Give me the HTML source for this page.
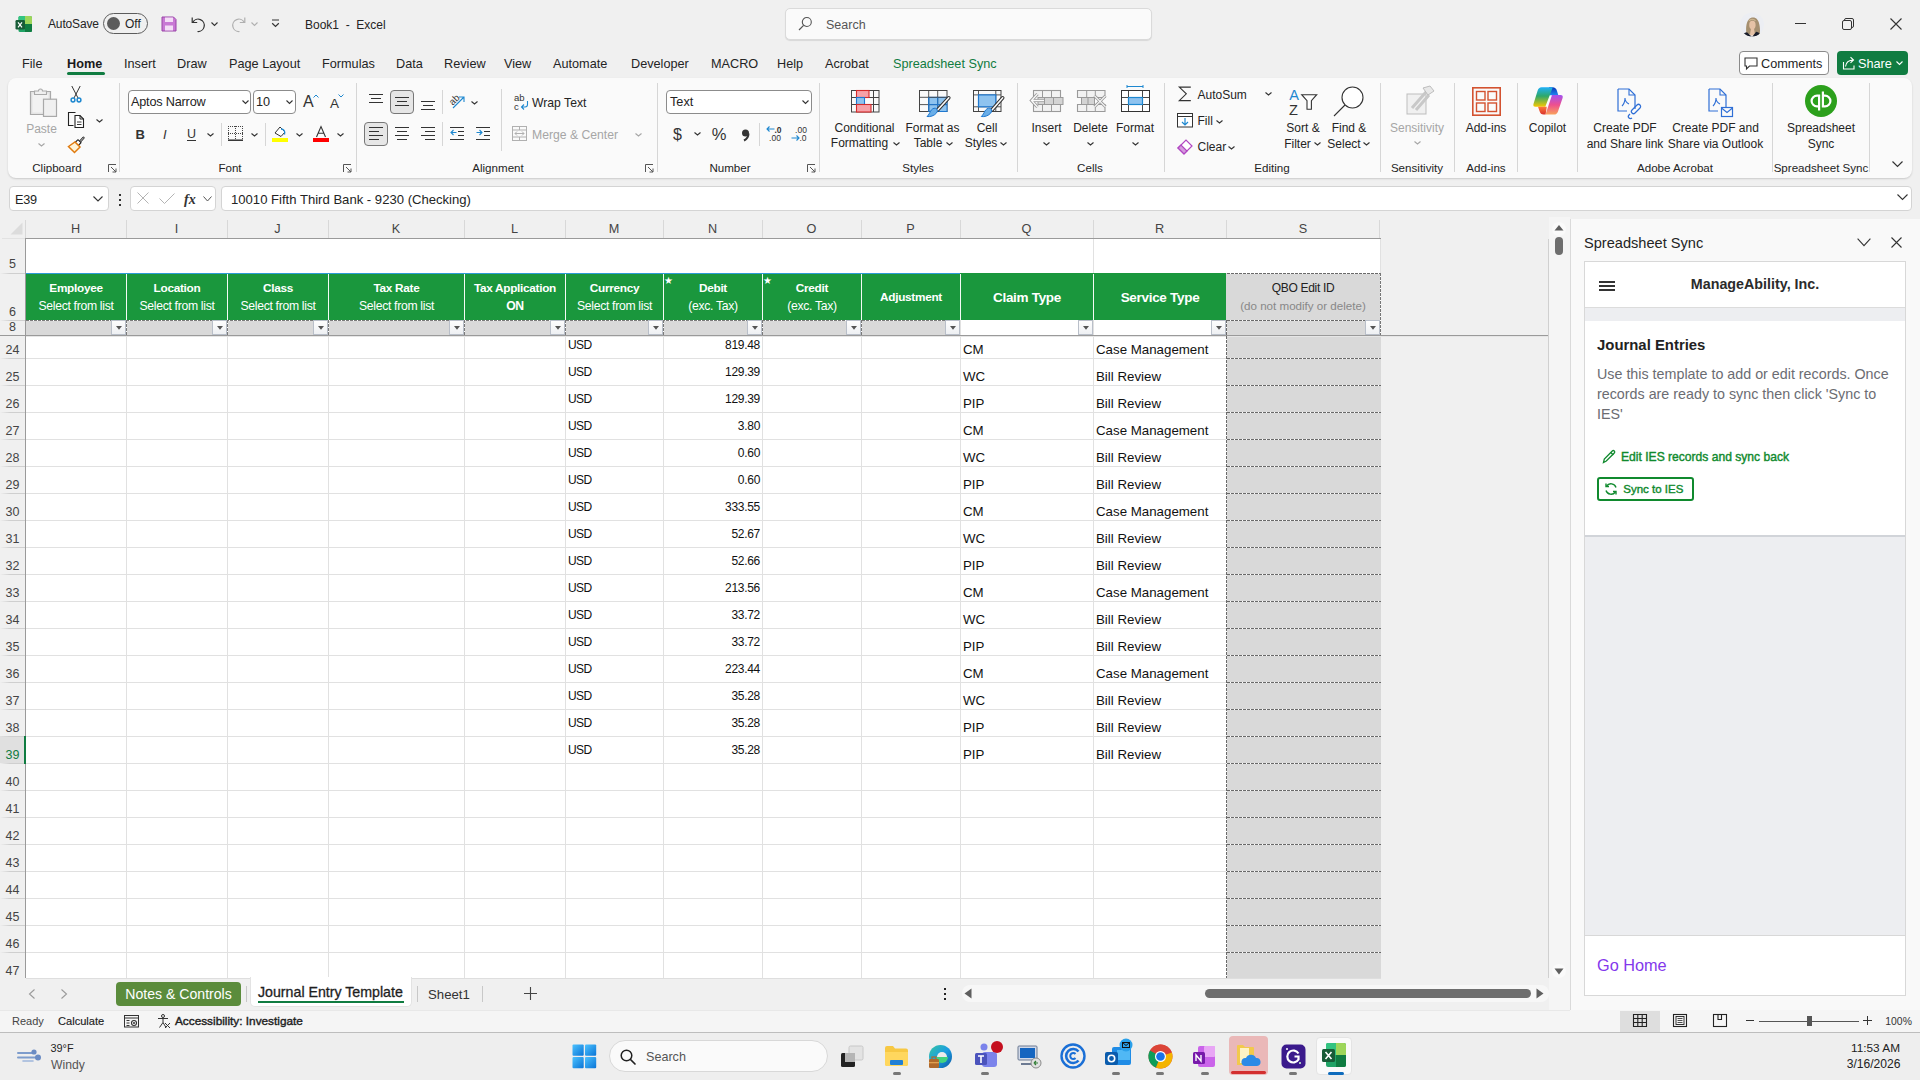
<!DOCTYPE html>
<html><head><meta charset="utf-8">
<style>
*{box-sizing:border-box;margin:0;padding:0}
html,body{width:1920px;height:1080px;overflow:hidden;background:#f0f0f0;font-family:"Liberation Sans",sans-serif;color:#242424;position:relative}
.a{position:absolute}
.t{position:absolute;white-space:nowrap;line-height:1}
svg{position:absolute;overflow:visible}
</style></head><body>
<svg style="left:15px;top:15px;" width="18" height="18" viewBox="0 0 18 18">
 <rect x="3.5" y="1" width="13.5" height="16" rx="1.5" fill="#21a366"/>
 <path d="M10 1h5.5a1.5 1.5 0 0 1 1.5 1.5V9h-7z" fill="#9ed65a"/>
 <path d="M3.5 2.5a1.5 1.5 0 0 1 1.5-1.5h5v8h-6.5z" fill="#33c481"/>
 <path d="M10 9h7v6.5a1.5 1.5 0 0 1-1.5 1.5h-5.5z" fill="#107c41"/>
 <rect x="0.5" y="5" width="9.5" height="9.5" rx="1.2" fill="#185c37"/>
 <path d="M3 7.3l4 5M7 7.3l-4 5" stroke="#fff" stroke-width="1.2"/></svg>
<div class="t" style="top:18.34px;font-size:12px;left:48px;letter-spacing:-0.15px;">AutoSave</div>
<div class="a" style="left:103px;top:13px;width:45px;height:21px;border:1px solid #5c5c5c;border-radius:11px;"></div>
<div class="a" style="left:106.5px;top:17px;width:13px;height:13px;background:#5c5c5c;border-radius:50%;"></div>
<div class="t" style="top:18.34px;font-size:12px;left:125px;">Off</div>
<svg style="left:161px;top:16px;" width="16" height="16" viewBox="0 0 16 16"><path d="M1 1h11.5L15 3.5V15H1z" fill="#c878d4" stroke="#9a45a8" stroke-width="1"/>
 <rect x="4" y="1.5" width="8" height="4.5" fill="#f3ddf6"/><rect x="4" y="9.5" width="8" height="5" fill="#f3ddf6"/></svg>
<svg style="left:190px;top:15px;" width="18" height="18" viewBox="0 0 18 18"><path d="M2.2 2.5v5h5" fill="none" stroke="#333" stroke-width="1.2"/><path d="M2.7 7.2A6.2 6.2 0 1 1 7.5 16.5" fill="none" stroke="#333" stroke-width="1.2"/></svg>
<svg style="left:211px;top:22px;" width="7" height="4.5" viewBox="0 0 7 4.5"><path d="M0.5 0.5L3.5 3.5L6.5 0.5" fill="none" stroke="#333" stroke-width="1.1"/></svg>
<svg style="left:229px;top:15px;" width="18" height="18" viewBox="0 0 18 18"><path d="M15.8 2.5v5h-5" fill="none" stroke="#b0b0b0" stroke-width="1.2"/><path d="M15.3 7.2A6.2 6.2 0 1 0 10.5 16.5" fill="none" stroke="#b0b0b0" stroke-width="1.2"/></svg>
<svg style="left:251px;top:22px;" width="7" height="4.5" viewBox="0 0 7 4.5"><path d="M0.5 0.5L3.5 3.5L6.5 0.5" fill="none" stroke="#b0b0b0" stroke-width="1.1"/></svg>
<svg style="left:271px;top:19px;" width="9" height="9" viewBox="0 0 9 9"><path d="M1 1h7M1.2 4.3l3.3 3.2 3.3-3.2" fill="none" stroke="#333" stroke-width="1.2"/></svg>
<div class="t" style="top:18.84px;font-size:12px;left:305px;">Book1&nbsp; -&nbsp; Excel</div>
<div class="a" style="left:785px;top:8px;width:367px;height:32px;background:#fafafa;border:1px solid #dadada;border-radius:5px;box-shadow:0 1px 1px rgba(0,0,0,.10);"></div>
<svg style="left:797px;top:16px;" width="16" height="16" viewBox="0 0 16 16"><circle cx="9.8" cy="6" r="4.5" fill="none" stroke="#555" stroke-width="1.1"/><path d="M6.6 9.3L2 14" stroke="#555" stroke-width="1.2"/></svg>
<div class="t" style="top:18.92px;font-size:12.5px;left:826px;color:#555;">Search</div>
<svg style="left:1740px;top:12px;" width="24" height="25" viewBox="0 0 24 25"><defs><clipPath id="av"><circle cx="12" cy="12.5" r="12"/></clipPath></defs><g clip-path="url(#av)">
<rect width="24" height="25" fill="#eceef3"/>
<path d="M6.5 22c-.8-5-.5-11.5 2.3-14.5 2.2-2.6 6.3-2.6 8.4 0 2.6 3 3.2 9.5 2.6 15.5z" fill="#a58f70"/>
<path d="M9 9c1-2 5-2.5 6.5 0" fill="none" stroke="#c9b38f" stroke-width="1.2"/>
<ellipse cx="12.4" cy="13" rx="3.2" ry="4.2" fill="#e6c2a6"/>
<path d="M11 16.5h3l1.2 7h-5.4z" fill="#e6c2a6"/>
<path d="M1.5 25c.5-3 2.8-4.5 5.5-4.8l5 4.8 4.2-5.2c2.2.3 4 1.2 4.6 5.2z" fill="#1a1d2a"/></g></svg>
<div class="a" style="left:1795px;top:23px;width:11px;height:1px;background:#333;"></div>
<svg style="left:1842px;top:18px;" width="12" height="12" viewBox="0 0 12 12"><rect x="0.5" y="2.5" width="9" height="9" rx="1.5" fill="none" stroke="#333"/><path d="M2.5 2.3V2a1.5 1.5 0 0 1 1.5-1.5h6A1.5 1.5 0 0 1 11.5 2v6a1.5 1.5 0 0 1-1.5 1.5h-.3" fill="none" stroke="#333"/></svg>
<svg style="left:1890px;top:18px;" width="12" height="12" viewBox="0 0 12 12"><path d="M0.5 0.5l11 11M11.5 0.5l-11 11" stroke="#333" stroke-width="1.1"/></svg>
<div class="t" style="top:57.85px;font-size:12.7px;left:22px;">File</div>
<div class="t" style="top:57.85px;font-size:12.7px;left:124px;">Insert</div>
<div class="t" style="top:57.85px;font-size:12.7px;left:177px;">Draw</div>
<div class="t" style="top:57.85px;font-size:12.7px;left:229px;">Page Layout</div>
<div class="t" style="top:57.85px;font-size:12.7px;left:322px;">Formulas</div>
<div class="t" style="top:57.85px;font-size:12.7px;left:396px;">Data</div>
<div class="t" style="top:57.85px;font-size:12.7px;left:444px;">Review</div>
<div class="t" style="top:57.85px;font-size:12.7px;left:504px;">View</div>
<div class="t" style="top:57.85px;font-size:12.7px;left:553px;">Automate</div>
<div class="t" style="top:57.85px;font-size:12.7px;left:631px;">Developer</div>
<div class="t" style="top:57.85px;font-size:12.7px;left:711px;">MACRO</div>
<div class="t" style="top:57.85px;font-size:12.7px;left:777px;">Help</div>
<div class="t" style="top:57.85px;font-size:12.7px;left:825px;">Acrobat</div>
<div class="t" style="top:57.85px;font-size:12.7px;left:67px;color:#1a1a1a;font-weight:bold;">Home</div>
<div class="a" style="left:67px;top:72px;width:38px;height:3px;background:#107c41;border-radius:2px;"></div>
<div class="t" style="top:57.85px;font-size:12.7px;left:893px;color:#107c41;">Spreadsheet Sync</div>
<div class="a" style="left:1739px;top:51px;width:90px;height:24px;background:#fff;border:1px solid #8a8a8a;border-radius:4px;"></div>
<svg style="left:1744px;top:57px;" width="14" height="13" viewBox="0 0 14 13"><path d="M1 1h12v8H5.5l-3 3V9H1z" fill="none" stroke="#333" stroke-width="1.1"/></svg>
<div class="t" style="top:57.85px;font-size:12.7px;left:1761px;">Comments</div>
<div class="a" style="left:1837px;top:51px;width:71px;height:24px;background:#107c41;border-radius:4px;"></div>
<svg style="left:1842px;top:56px;" width="14" height="14" viewBox="0 0 14 14"><path d="M1.5 6v7h10.5V9.5" fill="none" stroke="#fff" stroke-width="1.1"/><path d="M3.5 10.5c.5-4 3.5-6.5 8-6.5M8.5 1.2l3 2.8-3 2.8" fill="none" stroke="#fff" stroke-width="1.1"/></svg>
<div class="t" style="top:57.85px;font-size:12.7px;left:1858px;color:#fff;">Share</div>
<svg style="left:1896px;top:61px;" width="7" height="4.5" viewBox="0 0 7 4.5"><path d="M0.5 0.5L3.5 3.5L6.5 0.5" fill="none" stroke="#fff" stroke-width="1.1"/></svg>
<div class="a" style="left:8px;top:78px;width:1904px;height:100px;background:#fafafa;border-radius:8px;box-shadow:0 1px 2px rgba(0,0,0,.16);"></div>
<div class="t" style="top:162.08px;font-size:11.6px;left:-43.00px;width:200px;text-align:center;color:#242424;">Clipboard</div>
<div class="t" style="top:162.08px;font-size:11.6px;left:130.00px;width:200px;text-align:center;color:#242424;">Font</div>
<div class="t" style="top:162.08px;font-size:11.6px;left:398.00px;width:200px;text-align:center;color:#242424;">Alignment</div>
<div class="t" style="top:162.08px;font-size:11.6px;left:630.00px;width:200px;text-align:center;color:#242424;">Number</div>
<div class="t" style="top:162.08px;font-size:11.6px;left:818.00px;width:200px;text-align:center;color:#242424;">Styles</div>
<div class="t" style="top:162.08px;font-size:11.6px;left:990.00px;width:200px;text-align:center;color:#242424;">Cells</div>
<div class="t" style="top:162.08px;font-size:11.6px;left:1172.00px;width:200px;text-align:center;color:#242424;">Editing</div>
<div class="t" style="top:162.08px;font-size:11.6px;left:1317.00px;width:200px;text-align:center;color:#242424;">Sensitivity</div>
<div class="t" style="top:162.08px;font-size:11.6px;left:1386.00px;width:200px;text-align:center;color:#242424;">Add-ins</div>
<div class="t" style="top:162.08px;font-size:11.6px;left:1575.00px;width:200px;text-align:center;color:#242424;">Adobe Acrobat</div>
<div class="t" style="top:162.08px;font-size:11.6px;left:1721.00px;width:200px;text-align:center;color:#242424;">Spreadsheet Sync</div>
<div class="a" style="left:119px;top:83px;width:1px;height:89px;background:#d6d6d6;"></div>
<div class="a" style="left:356px;top:83px;width:1px;height:89px;background:#d6d6d6;"></div>
<div class="a" style="left:657px;top:83px;width:1px;height:89px;background:#d6d6d6;"></div>
<div class="a" style="left:819px;top:83px;width:1px;height:89px;background:#d6d6d6;"></div>
<div class="a" style="left:1017px;top:83px;width:1px;height:89px;background:#d6d6d6;"></div>
<div class="a" style="left:1164px;top:83px;width:1px;height:89px;background:#d6d6d6;"></div>
<div class="a" style="left:1380px;top:83px;width:1px;height:89px;background:#d6d6d6;"></div>
<div class="a" style="left:1454px;top:83px;width:1px;height:89px;background:#d6d6d6;"></div>
<div class="a" style="left:1517px;top:83px;width:1px;height:89px;background:#d6d6d6;"></div>
<div class="a" style="left:1577px;top:83px;width:1px;height:89px;background:#d6d6d6;"></div>
<div class="a" style="left:1772px;top:83px;width:1px;height:89px;background:#d6d6d6;"></div>
<div class="a" style="left:1869px;top:83px;width:1px;height:89px;background:#d6d6d6;"></div>
<svg style="left:108px;top:164px;" width="9" height="9" viewBox="0 0 9 9"><path d="M0.5 8V0.5H8" fill="none" stroke="#555" stroke-width="1"/><path d="M3 3l5 5M8 4.5V8H4.5" fill="none" stroke="#555" stroke-width="1"/></svg>
<svg style="left:343px;top:164px;" width="9" height="9" viewBox="0 0 9 9"><path d="M0.5 8V0.5H8" fill="none" stroke="#555" stroke-width="1"/><path d="M3 3l5 5M8 4.5V8H4.5" fill="none" stroke="#555" stroke-width="1"/></svg>
<svg style="left:645px;top:164px;" width="9" height="9" viewBox="0 0 9 9"><path d="M0.5 8V0.5H8" fill="none" stroke="#555" stroke-width="1"/><path d="M3 3l5 5M8 4.5V8H4.5" fill="none" stroke="#555" stroke-width="1"/></svg>
<svg style="left:807px;top:164px;" width="9" height="9" viewBox="0 0 9 9"><path d="M0.5 8V0.5H8" fill="none" stroke="#555" stroke-width="1"/><path d="M3 3l5 5M8 4.5V8H4.5" fill="none" stroke="#555" stroke-width="1"/></svg>
<svg style="left:29px;top:86px;" width="30" height="32" viewBox="0 0 30 32"><path d="M1.5 5.5h20v23h-20z" fill="#e4e4e4" stroke="#a9a9a9" stroke-width="1.2"/><path d="M3.5 7.5h16v19h-16z" fill="#f2f2f2"/>
<path d="M5.5 5h4a2 2 0 0 1 4 0h4v3.5h-12z" fill="#efefef" stroke="#a9a9a9" stroke-width="1.1"/>
<rect x="14.5" y="13.2" width="13" height="17.2" fill="#f0f0f0" stroke="#a9a9a9" stroke-width="1.2"/></svg>
<div class="t" style="top:122.84px;font-size:12px;left:11.50px;width:60px;text-align:center;color:#a6a6a6;">Paste</div>
<svg style="left:37.5px;top:143px;" width="7" height="4" viewBox="0 0 7 4"><path d="M0.5 0.5L3.5 3L6.5 0.5" fill="none" stroke="#a6a6a6" stroke-width="1.1"/></svg>
<svg style="left:70px;top:85px;" width="13" height="18" viewBox="0 0 13 18"><path d="M1.8 1L8 13M10.2 1L4 13" stroke="#333" stroke-width="1"/><circle cx="3" cy="15" r="1.9" fill="none" stroke="#1e88d0" stroke-width="1.5"/><circle cx="9" cy="15" r="1.9" fill="none" stroke="#1e88d0" stroke-width="1.5"/></svg>
<svg style="left:67px;top:111px;" width="18" height="18" viewBox="0 0 18 18"><path d="M8.5 1.5H1.5v13h5" fill="none" stroke="#222" stroke-width="1.1"/><path d="M8 4.5h5l3.5 3.5v8.5H8z" fill="#fff" stroke="#222" stroke-width="1.1"/><path d="M13 4.5V8h3.5" fill="none" stroke="#222"/><path d="M10 11h4.5M10 13.5h4.5" stroke="#222" stroke-width=".9"/></svg>
<svg style="left:96px;top:118.5px;" width="7" height="4" viewBox="0 0 7 4"><path d="M0.5 0.5L3.5 3L6.5 0.5" fill="none" stroke="#333" stroke-width="1.1"/></svg>
<svg style="left:67px;top:136px;" width="18" height="18" viewBox="0 0 18 18"><path d="M16.5 1.8l-5 5.5" stroke="#222" stroke-width="2.4" stroke-linecap="round"/><path d="M16.5 1.8l-5 5.5" stroke="#fff" stroke-width=".8" stroke-linecap="round"/><path d="M8 6.5l3-2.8 3 3-2.8 3z" fill="#fff" stroke="#222" stroke-width="1.1"/><path d="M1.5 10.5L8 6l5 5-5.5 5.5z" fill="#fff3d6" stroke="#e07b10" stroke-width="1.5"/></svg>
<div class="a" style="left:128px;top:90px;width:123px;height:24px;background:#fff;border:1px solid #8c8c8c;border-radius:4px;"></div>
<div class="t" style="top:95.85px;font-size:12.7px;left:131px;color:#242424;letter-spacing:-0.2px;">Aptos Narrow</div>
<svg style="left:241.5px;top:100px;" width="7" height="4.5" viewBox="0 0 7 4.5"><path d="M0.5 0.5L3.5 3.5L6.5 0.5" fill="none" stroke="#333" stroke-width="1.1"/></svg>
<div class="a" style="left:253px;top:90px;width:43px;height:24px;background:#fff;border:1px solid #8c8c8c;border-radius:4px;"></div>
<div class="t" style="top:95.85px;font-size:12.7px;left:256px;color:#242424;">10</div>
<svg style="left:286px;top:100px;" width="7" height="4.5" viewBox="0 0 7 4.5"><path d="M0.5 0.5L3.5 3.5L6.5 0.5" fill="none" stroke="#333" stroke-width="1.1"/></svg>
<div class="t" style="top:93.96px;font-size:16px;left:303px;color:#333;">A</div>
<svg style="left:313px;top:94px;" width="6" height="4" viewBox="0 0 6 4"><path d="M0.5 3.5L3 1l2.5 2.5" fill="none" stroke="#1e88d0" stroke-width="1"/></svg>
<div class="t" style="top:96.52px;font-size:13.5px;left:330px;color:#333;">A</div>
<svg style="left:338px;top:94px;" width="6" height="4" viewBox="0 0 6 4"><path d="M0.5 0.5L3 3l2.5-2.5" fill="none" stroke="#1e88d0" stroke-width="1"/></svg>
<div class="t" style="top:127.50px;font-size:13px;left:135.5px;color:#333;font-weight:bold;">B</div>
<div class="t" style="top:127.50px;font-size:13px;left:163px;color:#333;"><i>I</i></div>
<div class="t" style="top:127.92px;font-size:12.5px;left:187px;color:#333;">U</div>
<div class="a" style="left:187px;top:139.5px;width:9px;height:1px;background:#333;"></div>
<svg style="left:207px;top:133px;" width="7" height="4" viewBox="0 0 7 4"><path d="M0.5 0.5L3.5 3L6.5 0.5" fill="none" stroke="#333" stroke-width="1.1"/></svg>
<div class="a" style="left:221px;top:123px;width:1px;height:23px;background:#d6d6d6;"></div>
<svg style="left:228px;top:126px;" width="16" height="16" viewBox="0 0 16 16"><path d="M0 0.5h15M0 7.5h15M0.5 0v14M14.5 0v14M7.5 0v14" fill="none" stroke="#444" stroke-width="1" stroke-dasharray="1 1"/><path d="M0 14.2h15" stroke="#222" stroke-width="1.4"/></svg>
<svg style="left:251px;top:133px;" width="7" height="4" viewBox="0 0 7 4"><path d="M0.5 0.5L3.5 3L6.5 0.5" fill="none" stroke="#333" stroke-width="1.1"/></svg>
<div class="a" style="left:265px;top:123px;width:1px;height:23px;background:#d6d6d6;"></div>
<svg style="left:272px;top:125px;" width="17" height="17" viewBox="0 0 17 17"><path d="M3 8l5-6 5 5-4 4.5z" fill="#fff" stroke="#333" stroke-width="1"/><path d="M9 4c2.5 0 4.5 2 3.5 5.5" fill="none" stroke="#1e88d0" stroke-width="1.3"/><rect x="0" y="13" width="16" height="4" fill="#ffff00"/></svg>
<svg style="left:296px;top:133px;" width="7" height="4" viewBox="0 0 7 4"><path d="M0.5 0.5L3.5 3L6.5 0.5" fill="none" stroke="#333" stroke-width="1.1"/></svg>
<svg style="left:316px;top:126px;" width="10" height="12" viewBox="0 0 10 12"><path d="M0.5 11L5 0.6 9.5 11M2.2 7.3h5.6" fill="none" stroke="#333" stroke-width="1.1"/></svg>
<div class="a" style="left:313px;top:138px;width:16px;height:4px;background:#ff0000;"></div>
<svg style="left:336.5px;top:133px;" width="7" height="4" viewBox="0 0 7 4"><path d="M0.5 0.5L3.5 3L6.5 0.5" fill="none" stroke="#333" stroke-width="1.1"/></svg>
<div class="a" style="left:369px;top:94px;width:14px;height:1px;background:#333;"></div>
<div class="a" style="left:371px;top:98px;width:10px;height:1px;background:#333;"></div>
<div class="a" style="left:369px;top:102px;width:14px;height:1px;background:#333;"></div>
<div class="a" style="left:390px;top:90px;width:24px;height:24px;background:#e6e6e6;border:1px solid #777;border-radius:4px;"></div>
<div class="a" style="left:395px;top:97px;width:14px;height:1px;background:#333;"></div>
<div class="a" style="left:397px;top:101px;width:10px;height:1px;background:#333;"></div>
<div class="a" style="left:395px;top:105px;width:14px;height:1px;background:#333;"></div>
<div class="a" style="left:421px;top:101px;width:14px;height:1px;background:#333;"></div>
<div class="a" style="left:423px;top:105px;width:10px;height:1px;background:#333;"></div>
<div class="a" style="left:421px;top:109px;width:14px;height:1px;background:#333;"></div>
<div class="a" style="left:442px;top:90px;width:1px;height:24px;background:#d6d6d6;"></div>
<div class="t" style="top:95.01px;font-size:9.5px;left:449px;color:#333;"><span style="display:inline-block;transform:rotate(-45deg)">ab</span></div>
<svg style="left:452px;top:95px;" width="14" height="14" viewBox="0 0 14 14"><path d="M1 13L12 2M7 2h5v5" fill="none" stroke="#1e88d0" stroke-width="1.1"/></svg>
<svg style="left:471px;top:101px;" width="7" height="4" viewBox="0 0 7 4"><path d="M0.5 0.5L3.5 3L6.5 0.5" fill="none" stroke="#333" stroke-width="1.1"/></svg>
<div class="a" style="left:501px;top:89px;width:1px;height:62px;background:#d6d6d6;"></div>
<div class="t" style="top:93.01px;font-size:9.5px;left:514px;color:#333;">ab</div>
<div class="t" style="top:101.51px;font-size:9.5px;left:514px;color:#333;">c</div>
<svg style="left:520px;top:100px;" width="9" height="10" viewBox="0 0 9 10"><path d="M7.5 1v3.5a2.5 2.5 0 0 1-2.5 2.5H1.5M4 4.5L1.5 7 4 9.5" fill="none" stroke="#1e88d0" stroke-width="1.1"/></svg>
<div class="t" style="top:97.02px;font-size:12.2px;left:532px;color:#242424;">Wrap Text</div>
<div class="a" style="left:364px;top:122px;width:24px;height:24px;background:#e6e6e6;border:1px solid #777;border-radius:4px;"></div>
<div class="a" style="left:369px;top:127px;width:14px;height:1px;background:#333;"></div>
<div class="a" style="left:369px;top:131px;width:10px;height:1px;background:#333;"></div>
<div class="a" style="left:369px;top:135px;width:14px;height:1px;background:#333;"></div>
<div class="a" style="left:369px;top:139px;width:10px;height:1px;background:#333;"></div>
<div class="a" style="left:395px;top:127px;width:14px;height:1px;background:#333;"></div>
<div class="a" style="left:397px;top:131px;width:10px;height:1px;background:#333;"></div>
<div class="a" style="left:395px;top:135px;width:14px;height:1px;background:#333;"></div>
<div class="a" style="left:397px;top:139px;width:10px;height:1px;background:#333;"></div>
<div class="a" style="left:421px;top:127px;width:14px;height:1px;background:#333;"></div>
<div class="a" style="left:425px;top:131px;width:10px;height:1px;background:#333;"></div>
<div class="a" style="left:421px;top:135px;width:14px;height:1px;background:#333;"></div>
<div class="a" style="left:425px;top:139px;width:10px;height:1px;background:#333;"></div>
<div class="a" style="left:442px;top:122px;width:1px;height:24px;background:#d6d6d6;"></div>
<div class="a" style="left:450px;top:127px;width:14px;height:1px;background:#333;"></div>
<div class="a" style="left:458px;top:131px;width:6px;height:1px;background:#333;"></div>
<div class="a" style="left:458px;top:135px;width:6px;height:1px;background:#333;"></div>
<div class="a" style="left:450px;top:139px;width:14px;height:1px;background:#333;"></div>
<svg style="left:450px;top:129px;" width="7" height="7" viewBox="0 0 7 7"><path d="M6.5 3.5H1M3.5 1L1 3.5 3.5 6" fill="none" stroke="#1e88d0" stroke-width="1.1"/></svg>
<div class="a" style="left:476px;top:127px;width:14px;height:1px;background:#333;"></div>
<div class="a" style="left:484px;top:131px;width:6px;height:1px;background:#333;"></div>
<div class="a" style="left:484px;top:135px;width:6px;height:1px;background:#333;"></div>
<div class="a" style="left:476px;top:139px;width:14px;height:1px;background:#333;"></div>
<svg style="left:476px;top:129px;" width="7" height="7" viewBox="0 0 7 7"><path d="M0.5 3.5H6M3.5 1L6 3.5 3.5 6" fill="none" stroke="#1e88d0" stroke-width="1.1"/></svg>
<svg style="left:512px;top:126px;" width="16" height="16" viewBox="0 0 16 16"><rect x="0.5" y="0.5" width="14" height="14" fill="none" stroke="#b0b0b0"/><path d="M0.5 4h14M0.5 11h14M7.5 0.5v3.5M7.5 11v3.5M3 7.5h9M5 5.5l-2 2 2 2M10 5.5l2 2-2 2" fill="none" stroke="#b0b0b0"/></svg>
<div class="t" style="top:129.02px;font-size:12.2px;left:532px;color:#a6a6a6;">Merge &amp; Center</div>
<svg style="left:634.5px;top:133px;" width="7" height="4" viewBox="0 0 7 4"><path d="M0.5 0.5L3.5 3L6.5 0.5" fill="none" stroke="#a6a6a6" stroke-width="1.1"/></svg>
<div class="a" style="left:666px;top:90px;width:146px;height:24px;background:#fff;border:1px solid #8c8c8c;border-radius:4px;"></div>
<div class="t" style="top:95.85px;font-size:12.7px;left:670px;color:#242424;">Text</div>
<svg style="left:802px;top:100px;" width="7" height="4.5" viewBox="0 0 7 4.5"><path d="M0.5 0.5L3.5 3.5L6.5 0.5" fill="none" stroke="#333" stroke-width="1.1"/></svg>
<div class="t" style="top:126.96px;font-size:16px;left:667.50px;width:20px;text-align:center;color:#333;font-weight:300;">$</div>
<svg style="left:693.5px;top:132px;" width="7" height="4" viewBox="0 0 7 4"><path d="M0.5 0.5L3.5 3L6.5 0.5" fill="none" stroke="#333" stroke-width="1.1"/></svg>
<div class="t" style="top:126.48px;font-size:16.5px;left:707.00px;width:24px;text-align:center;color:#333;">%</div>
<svg style="left:741px;top:129px;" width="9" height="12" viewBox="0 0 9 12"><circle cx="4.5" cy="4" r="3.5" fill="#333"/><path d="M7.5 4.5c0 3-1.5 5.5-4.5 7" fill="none" stroke="#333" stroke-width="2"/></svg>
<div class="a" style="left:759px;top:123px;width:1px;height:23px;background:#d6d6d6;"></div>
<div class="t" style="top:126.45px;font-size:8.5px;left:768.00px;width:20px;text-align:center;color:#333;font-weight:bold;">.0</div>
<div class="t" style="top:134.45px;font-size:8.5px;left:765.00px;width:20px;text-align:center;color:#333;">.00</div>
<svg style="left:766px;top:126px;" width="9" height="6" viewBox="0 0 9 6"><path d="M8.5 3H1M3.5 0.5L1 3l2.5 2.5" fill="none" stroke="#1e88d0" stroke-width="1.1"/></svg>
<div class="t" style="top:126.45px;font-size:8.5px;left:791.00px;width:20px;text-align:center;color:#333;">.00</div>
<div class="t" style="top:134.45px;font-size:8.5px;left:793.00px;width:20px;text-align:center;color:#333;">.0</div>
<svg style="left:791px;top:135px;" width="9" height="6" viewBox="0 0 9 6"><path d="M0.5 3H8M5.5 0.5L8 3 5.5 5.5" fill="none" stroke="#1e88d0" stroke-width="1.1"/></svg>
<svg style="left:851px;top:90px;" width="29" height="23" viewBox="0 0 29 23"><rect x="0.5" y="0.5" width="27.5" height="21.5" fill="#fafafa" stroke="#444" stroke-width="1"/>
<path d="M5.5 0.5v21.5M22.5 0.5v21.5M0.5 7.5h27.5M0.5 14.5h27.5" stroke="#444" fill="none" stroke-width="1"/>
<rect x="5.5" y="0.5" width="12.5" height="7" fill="#f7a1a8" stroke="#d52b2b" stroke-width="1.1"/>
<rect x="5.5" y="7.5" width="8" height="7" fill="#8ec3ef" stroke="#1e78d0" stroke-width="1.1"/>
<rect x="5.5" y="14.5" width="14.5" height="7.5" fill="#f7a1a8" stroke="#d52b2b" stroke-width="1.1"/></svg>
<div class="t" style="top:121.84px;font-size:12px;left:814.50px;width:100px;text-align:center;color:#242424;">Conditional</div>
<div class="t" style="top:136.84px;font-size:12px;left:809.50px;width:100px;text-align:center;color:#242424;">Formatting</div>
<svg style="left:892.5px;top:141.5px;" width="7" height="4" viewBox="0 0 7 4"><path d="M0.5 0.5L3.5 3L6.5 0.5" fill="none" stroke="#333" stroke-width="1.1"/></svg>
<svg style="left:919px;top:90px;" width="33" height="28" viewBox="0 0 33 28"><rect x="0.5" y="0.5" width="27.5" height="21" fill="#fafafa" stroke="#444"/>
<rect x="9.7" y="7.3" width="18.3" height="14.2" fill="#8ec3ef" stroke="#1e78d0"/>
<path d="M9.7 0.5v21M18.7 0.5v21M0.5 7.3h27.5M0.5 14.6h27.5" stroke="#444" fill="none" stroke-width=".9"/>
<path d="M9.7 7.3v14.2M18.7 7.3v14.2M9.7 14.6h18.3" stroke="#1e78d0" stroke-width="1"/>
<path d="M29.8 7.8L18.6 20" stroke="#333" stroke-width="3.6" stroke-linecap="round"/><path d="M29.8 7.8L18.6 20" stroke="#fafafa" stroke-width="1.6" stroke-linecap="round"/>
<path d="M8 26.5c3 .5 7-.5 9.5-3.5 1.5-2 1-4.2-1-4.7-2-.5-4 1-5 3-.8 1.6-1.8 3.7-3.5 5.2z" fill="#6aaee8" stroke="#1e78d0" stroke-width="1"/></svg>
<div class="t" style="top:121.84px;font-size:12px;left:882.50px;width:100px;text-align:center;color:#242424;">Format as</div>
<div class="t" style="top:136.84px;font-size:12px;left:878.00px;width:100px;text-align:center;color:#242424;">Table</div>
<svg style="left:946px;top:141.5px;" width="7" height="4" viewBox="0 0 7 4"><path d="M0.5 0.5L3.5 3L6.5 0.5" fill="none" stroke="#333" stroke-width="1.1"/></svg>
<svg style="left:973px;top:90px;" width="33" height="28" viewBox="0 0 33 28"><rect x="0.5" y="0.5" width="27.5" height="21" fill="#fafafa" stroke="#444"/>
<path d="M5.5 0.5v21M22.8 0.5v21M0.5 4.9h27.5M0.5 16.8h27.5" stroke="#444" fill="none" stroke-width=".9"/>
<rect x="5.5" y="4.9" width="17.3" height="11.9" fill="#8ec3ef" stroke="#1e78d0" stroke-width="1.2"/>
<path d="M29.7 7.8L19 20" stroke="#333" stroke-width="3.6" stroke-linecap="round"/><path d="M29.7 7.8L19 20" stroke="#fafafa" stroke-width="1.6" stroke-linecap="round"/>
<path d="M8.3 26.5c3 .5 7-.5 9.5-3.5 1.5-2 1-4.2-1-4.7-2-.5-4 1-5 3-.8 1.6-1.8 3.7-3.5 5.2z" fill="#6aaee8" stroke="#1e78d0" stroke-width="1"/></svg>
<div class="t" style="top:121.84px;font-size:12px;left:957.00px;width:60px;text-align:center;color:#242424;">Cell</div>
<div class="t" style="top:136.84px;font-size:12px;left:951.00px;width:60px;text-align:center;color:#242424;">Styles</div>
<svg style="left:999.5px;top:141.5px;" width="7" height="4" viewBox="0 0 7 4"><path d="M0.5 0.5L3.5 3L6.5 0.5" fill="none" stroke="#333" stroke-width="1.1"/></svg>
<svg style="left:1030px;top:89px;" width="35" height="25" viewBox="0 0 35 25"><rect x="3.5" y="1.5" width="27" height="21" fill="#f2f2f2" stroke="#9a9a9a" stroke-width="1.1"/>
<path d="M12.5 1.5v21M21.5 1.5v21" stroke="#9a9a9a" stroke-width="1"/>
<rect x="8" y="8.5" width="25" height="7" fill="#d4d4d4" stroke="#9a9a9a"/><path d="M14.5 8.5v7M23.5 8.5v7" stroke="#9a9a9a"/>
<path d="M7.5 5L1.5 11.5 7.5 18M2 11.5h12" fill="none" stroke="#9a9a9a" stroke-width="3.2" stroke-linejoin="miter"/>
<path d="M7.5 5L1.5 11.5 7.5 18M2 11.5h12" fill="none" stroke="#fafafa" stroke-width="1.3"/></svg>
<div class="t" style="top:121.84px;font-size:12px;left:1016.50px;width:60px;text-align:center;color:#242424;">Insert</div>
<svg style="left:1043px;top:142px;" width="7" height="4" viewBox="0 0 7 4"><path d="M0.5 0.5L3.5 3L6.5 0.5" fill="none" stroke="#333" stroke-width="1.1"/></svg>
<svg style="left:1075px;top:89px;" width="34" height="25" viewBox="0 0 34 25"><path d="M2.5 8.5v-7h27.5v7zM2.5 15.5v7h27.5v-7z" fill="#f2f2f2" stroke="#9a9a9a" stroke-width="1.1"/>
<path d="M11.7 1.5v7M20.3 1.5v7M11.7 15.5v7M20.3 15.5v7" stroke="#9a9a9a"/>
<path d="M2.5 8.5h20l3 3.5-3 3.5h-20" fill="none" stroke="#9a9a9a"/>
<rect x="6.5" y="8.5" width="13" height="7" fill="#d4d4d4" stroke="#9a9a9a"/><path d="M13 8.5v7" stroke="#9a9a9a"/>
<path d="M19.5 6.8l11 11M30.5 6.8l-11 11" stroke="#9a9a9a" stroke-width="3"/>
<path d="M19.5 6.8l11 11M30.5 6.8l-11 11" stroke="#fafafa" stroke-width="1.2"/></svg>
<div class="t" style="top:121.84px;font-size:12px;left:1060.50px;width:60px;text-align:center;color:#242424;">Delete</div>
<svg style="left:1087px;top:142px;" width="7" height="4" viewBox="0 0 7 4"><path d="M0.5 0.5L3.5 3L6.5 0.5" fill="none" stroke="#333" stroke-width="1.1"/></svg>
<svg style="left:1121px;top:85px;" width="29" height="28" viewBox="0 0 29 28"><path d="M6 1.5h16M6 0v3M22 0v3" stroke="#1e88d0" stroke-width="1"/>
<rect x="0.5" y="5.5" width="28" height="21" fill="#fff" stroke="#333"/>
<path d="M0.5 12.5h28M0.5 19.5h28M7.5 5.5v21M21.5 5.5v21" stroke="#333" stroke-width=".9"/>
<rect x="7.5" y="12.5" width="14" height="7" fill="#8ec3ef" stroke="#1e88d0" stroke-width="1.2"/></svg>
<div class="t" style="top:121.84px;font-size:12px;left:1105.00px;width:60px;text-align:center;color:#242424;">Format</div>
<svg style="left:1131.5px;top:141.5px;" width="7" height="4" viewBox="0 0 7 4"><path d="M0.5 0.5L3.5 3L6.5 0.5" fill="none" stroke="#333" stroke-width="1.1"/></svg>
<svg style="left:1178px;top:86px;" width="14" height="16" viewBox="0 0 14 16"><path d="M12.8 1.1H1.3L8.3 7.8 1.3 14.6h11.5" fill="none" stroke="#333" stroke-width="1.1"/></svg>
<div class="t" style="top:88.84px;font-size:12px;left:1197.5px;color:#242424;">AutoSum</div>
<svg style="left:1264.5px;top:92px;" width="7" height="4" viewBox="0 0 7 4"><path d="M0.5 0.5L3.5 3L6.5 0.5" fill="none" stroke="#333" stroke-width="1.1"/></svg>
<svg style="left:1177px;top:113px;" width="16" height="15" viewBox="0 0 16 15"><rect x="0.5" y="0.5" width="15" height="13.5" fill="#fff" stroke="#333"/><path d="M0.5 3.5h15" stroke="#333"/><path d="M8 5v7M5 9l3 3 3-3" fill="none" stroke="#1e88d0" stroke-width="1.2"/></svg>
<div class="t" style="top:114.84px;font-size:12px;left:1197.5px;color:#242424;">Fill</div>
<svg style="left:1216px;top:119.5px;" width="7" height="4" viewBox="0 0 7 4"><path d="M0.5 0.5L3.5 3L6.5 0.5" fill="none" stroke="#333" stroke-width="1.1"/></svg>
<svg style="left:1177px;top:138px;" width="16" height="16" viewBox="0 0 16 16"><path d="M1 10l8-8 6 6-8 8z" fill="#fff" stroke="#b146c2" stroke-width="1.2"/><path d="M1 10l3-3 6 6-3 3z" fill="#d59ade" stroke="#b146c2" stroke-width="1.2"/></svg>
<div class="t" style="top:140.84px;font-size:12px;left:1197.5px;color:#242424;">Clear</div>
<svg style="left:1227.5px;top:145.5px;" width="7" height="4" viewBox="0 0 7 4"><path d="M0.5 0.5L3.5 3L6.5 0.5" fill="none" stroke="#333" stroke-width="1.1"/></svg>
<div class="t" style="top:87.99px;font-size:14.6px;left:1284.00px;width:20px;text-align:center;color:#1e88d0;">A</div>
<div class="t" style="top:102.59px;font-size:14.6px;left:1283.50px;width:20px;text-align:center;color:#333;">Z</div>
<svg style="left:1301px;top:94px;" width="17" height="16" viewBox="0 0 17 16"><path d="M0.7 0.7h15l-5.3 6v8.5H6v-8.5z" fill="#fff" stroke="#333" stroke-width="1.1"/></svg>
<div class="t" style="top:121.84px;font-size:12px;left:1273.00px;width:60px;text-align:center;color:#242424;">Sort &amp;</div>
<div class="t" style="top:137.84px;font-size:12px;left:1267.50px;width:60px;text-align:center;color:#242424;">Filter</div>
<svg style="left:1314px;top:141.5px;" width="7" height="4" viewBox="0 0 7 4"><path d="M0.5 0.5L3.5 3L6.5 0.5" fill="none" stroke="#333" stroke-width="1.1"/></svg>
<svg style="left:1333px;top:86px;" width="32" height="31" viewBox="0 0 32 31"><circle cx="19.5" cy="11.5" r="10.5" fill="#fff" stroke="#333" stroke-width="1.1"/><path d="M12 19L1 30" stroke="#333" stroke-width="1.1"/></svg>
<div class="t" style="top:121.84px;font-size:12px;left:1319.00px;width:60px;text-align:center;color:#242424;">Find &amp;</div>
<div class="t" style="top:137.84px;font-size:12px;left:1314.00px;width:60px;text-align:center;color:#242424;">Select</div>
<svg style="left:1362.5px;top:141.5px;" width="7" height="4" viewBox="0 0 7 4"><path d="M0.5 0.5L3.5 3L6.5 0.5" fill="none" stroke="#333" stroke-width="1.1"/></svg>
<svg style="left:1406px;top:85px;" width="29" height="31" viewBox="0 0 29 31"><rect x="1" y="9" width="19" height="20" fill="#f0f0f0" stroke="#bdbdbd"/>
<path d="M6 23L20 7M10 25L23 10" stroke="#c8c8c8" stroke-width="3"/><path d="M17 3l7-2 4 5-6 4z" fill="#e8e8e8" stroke="#bdbdbd"/></svg>
<div class="t" style="top:121.84px;font-size:12px;left:1377.00px;width:80px;text-align:center;color:#a6a6a6;">Sensitivity</div>
<svg style="left:1414px;top:141px;" width="7" height="4" viewBox="0 0 7 4"><path d="M0.5 0.5L3.5 3L6.5 0.5" fill="none" stroke="#a6a6a6" stroke-width="1.1"/></svg>
<svg style="left:1472px;top:87px;" width="29" height="29" viewBox="0 0 29 29"><rect x="0.8" y="0.8" width="27.4" height="27.4" fill="none" stroke="#d35230" stroke-width="1.6"/><rect x="4.5" y="4.5" width="8.5" height="8.5" fill="none" stroke="#d35230" stroke-width="1.4"/><rect x="16" y="4.5" width="8.5" height="8.5" fill="none" stroke="#d35230" stroke-width="1.4"/><rect x="4.5" y="16" width="8.5" height="8.5" fill="none" stroke="#d35230" stroke-width="1.4"/><rect x="16" y="16" width="8.5" height="8.5" fill="none" stroke="#d35230" stroke-width="1.4"/></svg>
<div class="t" style="top:121.84px;font-size:12px;left:1446.00px;width:80px;text-align:center;color:#242424;">Add-ins</div>
<svg style="left:1533px;top:87px;" width="31" height="28" viewBox="0 0 31 28"><defs><linearGradient id="lgL" x1="0" y1="0" x2="0" y2="1"><stop offset="0" stop-color="#1fb0f8"/><stop offset=".45" stop-color="#2ea86a"/><stop offset="1" stop-color="#f7c800"/></linearGradient>
<linearGradient id="lgR" x1="0" y1="0" x2="0" y2="1"><stop offset="0" stop-color="#a352f0"/><stop offset=".5" stop-color="#ee4f8e"/><stop offset="1" stop-color="#f9a35b"/></linearGradient>
<linearGradient id="lgT" x1="0" y1="0" x2="0" y2="1"><stop offset="0" stop-color="#0a36b8"/><stop offset="1" stop-color="#1e86f0"/></linearGradient>
<linearGradient id="lgB" x1="0" y1="0" x2="0" y2="1"><stop offset="0" stop-color="#ff7a3a"/><stop offset="1" stop-color="#d8302c"/></linearGradient></defs>
<path d="M16 0.3H19.5Q23 0.3 24 4L25.3 8.2H15z" fill="url(#lgT)"/>
<path d="M8.5 0.3H19.8L12.3 19.8H2.3Q0 19.8 0.4 17.3L4.5 4Q5.6 0.3 8.5 0.3z" fill="url(#lgL)"/>
<path d="M5 19.7H13.8L12.6 27.6H10.5Q7.5 27.6 6.5 24z" fill="url(#lgB)"/>
<path d="M19 8.1H27.6Q30.4 8.1 29.6 11L25 24.5Q24 27.6 21 27.6H12.5z" fill="url(#lgR)"/></svg>
<div class="t" style="top:121.84px;font-size:12px;left:1507.50px;width:80px;text-align:center;color:#242424;">Copilot</div>
<svg style="left:1615px;top:88px;" width="27" height="30" viewBox="0 0 27 30"><path d="M3 1h11l6 6v14" fill="none" stroke="#2f6fd6" stroke-width="1.2"/><path d="M3 1v22h9" fill="none" stroke="#2f6fd6" stroke-width="1.2"/><path d="M14 1v6h6" fill="none" stroke="#2f6fd6" stroke-width="1.1"/>
<path d="M7 18c2-2 3-5 3-8 0 3 2 5 4 6" fill="none" stroke="#2f6fd6" stroke-width="1.1"/><path d="M17 22l5-5a2 2 0 0 1 3 3l-5 5a2 2 0 0 1-3-3M15 26l-1 1a2 2 0 0 0 3 3" fill="none" stroke="#2f6fd6" stroke-width="1.2"/></svg>
<div class="t" style="top:121.84px;font-size:12px;left:1575.00px;width:100px;text-align:center;color:#242424;">Create PDF</div>
<div class="t" style="top:137.84px;font-size:12px;left:1575.00px;width:100px;text-align:center;color:#242424;">and Share link</div>
<svg style="left:1706px;top:88px;" width="27" height="30" viewBox="0 0 27 30"><path d="M3 1h11l6 6v14" fill="none" stroke="#2f6fd6" stroke-width="1.2"/><path d="M3 1v22h9" fill="none" stroke="#2f6fd6" stroke-width="1.2"/><path d="M14 1v6h6" fill="none" stroke="#2f6fd6" stroke-width="1.1"/>
<path d="M7 18c2-2 3-5 3-8 0 3 2 5 4 6" fill="none" stroke="#2f6fd6" stroke-width="1.1"/><rect x="15.5" y="19.5" width="11" height="9" fill="#fafafa" stroke="#2f6fd6" stroke-width="1.2"/><path d="M15.5 20l5.5 4.5 5.5-4.5" fill="none" stroke="#2f6fd6" stroke-width="1.1"/></svg>
<div class="t" style="top:121.84px;font-size:12px;left:1655.50px;width:120px;text-align:center;color:#242424;">Create PDF and</div>
<div class="t" style="top:137.84px;font-size:12px;left:1655.50px;width:120px;text-align:center;color:#242424;">Share via Outlook</div>
<svg style="left:1805px;top:85px;" width="32" height="32" viewBox="0 0 32 32"><circle cx="16" cy="16" r="16" fill="#2ca01c"/><path d="M12 9.5a6.5 6.5 0 0 0 0 13h1.5v-2.2H12a4.3 4.3 0 0 1 0-8.6h1v13.8h2.2V9.5z" fill="#fff"/><path d="M20 22.5a6.5 6.5 0 0 0 0-13h-1.5v2.2H20a4.3 4.3 0 0 1 0 8.6h-1V6.5h-2.2v16z" fill="#fff"/></svg>
<div class="t" style="top:121.84px;font-size:12px;left:1771.00px;width:100px;text-align:center;color:#242424;">Spreadsheet</div>
<div class="t" style="top:137.84px;font-size:12px;left:1771.00px;width:100px;text-align:center;color:#242424;">Sync</div>
<svg style="left:1892px;top:161px;" width="11" height="7" viewBox="0 0 11 7"><path d="M0.5 0.5l5 5 5-5" fill="none" stroke="#333" stroke-width="1.2"/></svg>
<div class="a" style="left:9px;top:186px;width:100px;height:25px;background:#fff;border:1px solid #d4d4d4;border-radius:4px;"></div>
<div class="t" style="top:193.85px;font-size:12.7px;left:15px;color:#242424;letter-spacing:-0.3px;">E39</div>
<svg style="left:93px;top:196px;" width="10" height="6" viewBox="0 0 10 6"><path d="M0.5 0.5l4.5 4.5 4.5-4.5" fill="none" stroke="#333" stroke-width="1.1"/></svg>
<div class="a" style="left:119px;top:194px;width:2px;height:2px;background:#333;"></div>
<div class="a" style="left:119px;top:199px;width:2px;height:2px;background:#333;"></div>
<div class="a" style="left:119px;top:204px;width:2px;height:2px;background:#333;"></div>
<div class="a" style="left:130px;top:186px;width:86px;height:25px;background:#fff;border:1px solid #d4d4d4;border-radius:4px;"></div>
<svg style="left:137px;top:192px;" width="12" height="12" viewBox="0 0 12 12"><path d="M0.5 0.5l11 11M11.5 0.5l-11 11" stroke="#b4b4b4" stroke-width="1"/></svg>
<svg style="left:159px;top:193px;" width="16" height="11" viewBox="0 0 16 11"><path d="M0.5 5.5l5 5 10-10" fill="none" stroke="#b4b4b4" stroke-width="1"/></svg>
<div class="t" style="top:193.15px;font-size:14px;left:184px;color:#333;font-family:'Liberation Serif',serif;font-weight:bold;"><i>fx</i></div>
<svg style="left:203px;top:196px;" width="9" height="6" viewBox="0 0 9 6"><path d="M0.5 0.5l4 4.5 4-4.5" fill="none" stroke="#555" stroke-width="1"/></svg>
<div class="a" style="left:221px;top:186px;width:1691px;height:25px;background:#fff;border:1px solid #d4d4d4;border-radius:4px;"></div>
<div class="t" style="top:192.96px;font-size:13.1px;left:231px;color:#242424;">10010 Fifth Third Bank - 9230 (Checking)</div>
<svg style="left:1897px;top:194px;" width="11" height="6" viewBox="0 0 11 6"><path d="M0.5 0.5l5 5 5-5" fill="none" stroke="#333" stroke-width="1.1"/></svg>
<div class="a" style="left:0px;top:217px;width:1549px;height:22px;background:#f0f0f0;"></div>
<svg style="left:10px;top:222px;" width="13" height="13" viewBox="0 0 13 13"><path d="M12.5 0.5v12h-12z" fill="#dcdcdc"/></svg>
<div class="t" style="top:222.85px;font-size:12.7px;left:45.50px;width:60px;text-align:center;color:#444;">H</div>
<div class="a" style="left:126px;top:220px;width:1px;height:18px;background:#d8d8d8;"></div>
<div class="t" style="top:222.85px;font-size:12.7px;left:146.50px;width:60px;text-align:center;color:#444;">I</div>
<div class="a" style="left:227px;top:220px;width:1px;height:18px;background:#d8d8d8;"></div>
<div class="t" style="top:222.85px;font-size:12.7px;left:247.50px;width:60px;text-align:center;color:#444;">J</div>
<div class="a" style="left:328px;top:220px;width:1px;height:18px;background:#d8d8d8;"></div>
<div class="t" style="top:222.85px;font-size:12.7px;left:366.00px;width:60px;text-align:center;color:#444;">K</div>
<div class="a" style="left:464px;top:220px;width:1px;height:18px;background:#d8d8d8;"></div>
<div class="t" style="top:222.85px;font-size:12.7px;left:484.50px;width:60px;text-align:center;color:#444;">L</div>
<div class="a" style="left:565px;top:220px;width:1px;height:18px;background:#d8d8d8;"></div>
<div class="t" style="top:222.85px;font-size:12.7px;left:584.00px;width:60px;text-align:center;color:#444;">M</div>
<div class="a" style="left:663px;top:220px;width:1px;height:18px;background:#d8d8d8;"></div>
<div class="t" style="top:222.85px;font-size:12.7px;left:682.50px;width:60px;text-align:center;color:#444;">N</div>
<div class="a" style="left:762px;top:220px;width:1px;height:18px;background:#d8d8d8;"></div>
<div class="t" style="top:222.85px;font-size:12.7px;left:781.50px;width:60px;text-align:center;color:#444;">O</div>
<div class="a" style="left:861px;top:220px;width:1px;height:18px;background:#d8d8d8;"></div>
<div class="t" style="top:222.85px;font-size:12.7px;left:880.50px;width:60px;text-align:center;color:#444;">P</div>
<div class="a" style="left:960px;top:220px;width:1px;height:18px;background:#d8d8d8;"></div>
<div class="t" style="top:222.85px;font-size:12.7px;left:996.50px;width:60px;text-align:center;color:#444;">Q</div>
<div class="a" style="left:1093px;top:220px;width:1px;height:18px;background:#d8d8d8;"></div>
<div class="t" style="top:222.85px;font-size:12.7px;left:1129.50px;width:60px;text-align:center;color:#444;">R</div>
<div class="a" style="left:1226px;top:220px;width:1px;height:18px;background:#d8d8d8;"></div>
<div class="t" style="top:222.85px;font-size:12.7px;left:1273.00px;width:60px;text-align:center;color:#444;">S</div>
<div class="a" style="left:1379px;top:220px;width:1px;height:18px;background:#d8d8d8;"></div>
<div class="a" style="left:25px;top:220px;width:1px;height:18px;background:#d8d8d8;"></div>
<div class="a" style="left:25px;top:238px;width:1356px;height:1px;background:#9a9a9a;"></div>
<div class="a" style="left:2px;top:238px;width:23px;height:1px;background:#e2e2e2;"></div>
<div class="a" style="left:26px;top:239px;width:1523px;height:739px;background:#f0f0f0;"></div>
<div class="a" style="left:26px;top:239px;width:1355px;height:739px;background:#fff;"></div>
<div class="a" style="left:0px;top:239px;width:25px;height:739px;background:#f0f0f0;"></div>
<div class="a" style="left:25px;top:239px;width:1px;height:739px;background:#9a9a9a;"></div>
<div class="a" style="left:0px;top:736px;width:25px;height:27px;background:#e0e0e0;"></div>
<div class="t" style="top:258.32px;font-size:12.5px;left:-2.50px;width:30px;text-align:center;color:#444;">5</div>
<div class="a" style="left:0px;top:273px;width:25px;height:1px;background:linear-gradient(90deg,rgba(200,200,200,0),#cfcfcf 40%,#cfcfcf);"></div>
<div class="t" style="top:305.72px;font-size:12.5px;left:-2.50px;width:30px;text-align:center;color:#444;">6</div>
<div class="a" style="left:0px;top:320px;width:25px;height:1px;background:linear-gradient(90deg,rgba(200,200,200,0),#cfcfcf 40%,#cfcfcf);"></div>
<div class="t" style="top:320.72px;font-size:12.5px;left:-2.50px;width:30px;text-align:center;color:#444;">8</div>
<div class="a" style="left:0px;top:335px;width:25px;height:1px;background:linear-gradient(90deg,rgba(200,200,200,0),#cfcfcf 40%,#cfcfcf);"></div>
<div class="t" style="top:343.92px;font-size:12.5px;left:-2.50px;width:30px;text-align:center;color:#444;">24</div>
<div class="a" style="left:0px;top:358px;width:25px;height:1px;background:linear-gradient(90deg,rgba(200,200,200,0),#cfcfcf 40%,#cfcfcf);"></div>
<div class="t" style="top:370.92px;font-size:12.5px;left:-2.50px;width:30px;text-align:center;color:#444;">25</div>
<div class="a" style="left:0px;top:385px;width:25px;height:1px;background:linear-gradient(90deg,rgba(200,200,200,0),#cfcfcf 40%,#cfcfcf);"></div>
<div class="t" style="top:397.92px;font-size:12.5px;left:-2.50px;width:30px;text-align:center;color:#444;">26</div>
<div class="a" style="left:0px;top:412px;width:25px;height:1px;background:linear-gradient(90deg,rgba(200,200,200,0),#cfcfcf 40%,#cfcfcf);"></div>
<div class="t" style="top:424.92px;font-size:12.5px;left:-2.50px;width:30px;text-align:center;color:#444;">27</div>
<div class="a" style="left:0px;top:439px;width:25px;height:1px;background:linear-gradient(90deg,rgba(200,200,200,0),#cfcfcf 40%,#cfcfcf);"></div>
<div class="t" style="top:451.92px;font-size:12.5px;left:-2.50px;width:30px;text-align:center;color:#444;">28</div>
<div class="a" style="left:0px;top:466px;width:25px;height:1px;background:linear-gradient(90deg,rgba(200,200,200,0),#cfcfcf 40%,#cfcfcf);"></div>
<div class="t" style="top:478.92px;font-size:12.5px;left:-2.50px;width:30px;text-align:center;color:#444;">29</div>
<div class="a" style="left:0px;top:493px;width:25px;height:1px;background:linear-gradient(90deg,rgba(200,200,200,0),#cfcfcf 40%,#cfcfcf);"></div>
<div class="t" style="top:505.92px;font-size:12.5px;left:-2.50px;width:30px;text-align:center;color:#444;">30</div>
<div class="a" style="left:0px;top:520px;width:25px;height:1px;background:linear-gradient(90deg,rgba(200,200,200,0),#cfcfcf 40%,#cfcfcf);"></div>
<div class="t" style="top:532.92px;font-size:12.5px;left:-2.50px;width:30px;text-align:center;color:#444;">31</div>
<div class="a" style="left:0px;top:547px;width:25px;height:1px;background:linear-gradient(90deg,rgba(200,200,200,0),#cfcfcf 40%,#cfcfcf);"></div>
<div class="t" style="top:559.92px;font-size:12.5px;left:-2.50px;width:30px;text-align:center;color:#444;">32</div>
<div class="a" style="left:0px;top:574px;width:25px;height:1px;background:linear-gradient(90deg,rgba(200,200,200,0),#cfcfcf 40%,#cfcfcf);"></div>
<div class="t" style="top:586.92px;font-size:12.5px;left:-2.50px;width:30px;text-align:center;color:#444;">33</div>
<div class="a" style="left:0px;top:601px;width:25px;height:1px;background:linear-gradient(90deg,rgba(200,200,200,0),#cfcfcf 40%,#cfcfcf);"></div>
<div class="t" style="top:613.92px;font-size:12.5px;left:-2.50px;width:30px;text-align:center;color:#444;">34</div>
<div class="a" style="left:0px;top:628px;width:25px;height:1px;background:linear-gradient(90deg,rgba(200,200,200,0),#cfcfcf 40%,#cfcfcf);"></div>
<div class="t" style="top:640.92px;font-size:12.5px;left:-2.50px;width:30px;text-align:center;color:#444;">35</div>
<div class="a" style="left:0px;top:655px;width:25px;height:1px;background:linear-gradient(90deg,rgba(200,200,200,0),#cfcfcf 40%,#cfcfcf);"></div>
<div class="t" style="top:667.92px;font-size:12.5px;left:-2.50px;width:30px;text-align:center;color:#444;">36</div>
<div class="a" style="left:0px;top:682px;width:25px;height:1px;background:linear-gradient(90deg,rgba(200,200,200,0),#cfcfcf 40%,#cfcfcf);"></div>
<div class="t" style="top:694.92px;font-size:12.5px;left:-2.50px;width:30px;text-align:center;color:#444;">37</div>
<div class="a" style="left:0px;top:709px;width:25px;height:1px;background:linear-gradient(90deg,rgba(200,200,200,0),#cfcfcf 40%,#cfcfcf);"></div>
<div class="t" style="top:721.92px;font-size:12.5px;left:-2.50px;width:30px;text-align:center;color:#444;">38</div>
<div class="a" style="left:0px;top:736px;width:25px;height:1px;background:linear-gradient(90deg,rgba(200,200,200,0),#cfcfcf 40%,#cfcfcf);"></div>
<div class="t" style="top:748.92px;font-size:12.5px;left:-2.50px;width:30px;text-align:center;color:#107c41;">39</div>
<div class="a" style="left:0px;top:763px;width:25px;height:1px;background:linear-gradient(90deg,rgba(200,200,200,0),#cfcfcf 40%,#cfcfcf);"></div>
<div class="t" style="top:775.92px;font-size:12.5px;left:-2.50px;width:30px;text-align:center;color:#444;">40</div>
<div class="a" style="left:0px;top:790px;width:25px;height:1px;background:linear-gradient(90deg,rgba(200,200,200,0),#cfcfcf 40%,#cfcfcf);"></div>
<div class="t" style="top:802.92px;font-size:12.5px;left:-2.50px;width:30px;text-align:center;color:#444;">41</div>
<div class="a" style="left:0px;top:817px;width:25px;height:1px;background:linear-gradient(90deg,rgba(200,200,200,0),#cfcfcf 40%,#cfcfcf);"></div>
<div class="t" style="top:829.92px;font-size:12.5px;left:-2.50px;width:30px;text-align:center;color:#444;">42</div>
<div class="a" style="left:0px;top:844px;width:25px;height:1px;background:linear-gradient(90deg,rgba(200,200,200,0),#cfcfcf 40%,#cfcfcf);"></div>
<div class="t" style="top:856.92px;font-size:12.5px;left:-2.50px;width:30px;text-align:center;color:#444;">43</div>
<div class="a" style="left:0px;top:871px;width:25px;height:1px;background:linear-gradient(90deg,rgba(200,200,200,0),#cfcfcf 40%,#cfcfcf);"></div>
<div class="t" style="top:883.92px;font-size:12.5px;left:-2.50px;width:30px;text-align:center;color:#444;">44</div>
<div class="a" style="left:0px;top:898px;width:25px;height:1px;background:linear-gradient(90deg,rgba(200,200,200,0),#cfcfcf 40%,#cfcfcf);"></div>
<div class="t" style="top:910.92px;font-size:12.5px;left:-2.50px;width:30px;text-align:center;color:#444;">45</div>
<div class="a" style="left:0px;top:925px;width:25px;height:1px;background:linear-gradient(90deg,rgba(200,200,200,0),#cfcfcf 40%,#cfcfcf);"></div>
<div class="t" style="top:937.92px;font-size:12.5px;left:-2.50px;width:30px;text-align:center;color:#444;">46</div>
<div class="a" style="left:0px;top:952px;width:25px;height:1px;background:linear-gradient(90deg,rgba(200,200,200,0),#cfcfcf 40%,#cfcfcf);"></div>
<div class="t" style="top:964.92px;font-size:12.5px;left:-2.50px;width:30px;text-align:center;color:#444;">47</div>
<div class="a" style="left:0px;top:979px;width:25px;height:1px;background:linear-gradient(90deg,rgba(200,200,200,0),#cfcfcf 40%,#cfcfcf);"></div>
<div class="a" style="left:24px;top:736px;width:2px;height:28px;background:#107c41;"></div>
<div class="a" style="left:1093px;top:239px;width:1px;height:34px;background:#e1e1e1;"></div>
<div class="a" style="left:1380px;top:239px;width:1px;height:34px;background:#e1e1e1;"></div>
<div class="a" style="left:26px;top:273px;width:1200px;height:47px;background:#1a973d;"></div>
<div class="a" style="left:26px;top:273px;width:934px;height:1px;background:#2d9bd6;"></div>
<div class="a" style="left:126px;top:274px;width:1px;height:46px;background:#f4faf5;"></div>
<div class="a" style="left:227px;top:274px;width:1px;height:46px;background:#f4faf5;"></div>
<div class="a" style="left:328px;top:274px;width:1px;height:46px;background:#f4faf5;"></div>
<div class="a" style="left:464px;top:274px;width:1px;height:46px;background:#f4faf5;"></div>
<div class="a" style="left:565px;top:274px;width:1px;height:46px;background:#f4faf5;"></div>
<div class="a" style="left:663px;top:274px;width:1px;height:46px;background:#f4faf5;"></div>
<div class="a" style="left:762px;top:274px;width:1px;height:46px;background:#f4faf5;"></div>
<div class="a" style="left:861px;top:274px;width:1px;height:46px;background:#f4faf5;"></div>
<div class="a" style="left:960px;top:274px;width:1px;height:46px;background:#f4faf5;"></div>
<div class="a" style="left:1093px;top:274px;width:1px;height:46px;background:#f4faf5;"></div>
<div class="t" style="top:282.71px;font-size:11.8px;left:25.50px;width:101px;text-align:center;color:#fff;font-weight:bold;letter-spacing:-0.3px;">Employee</div>
<div class="t" style="top:300.02px;font-size:12.2px;left:25.50px;width:101px;text-align:center;color:#fff;letter-spacing:-0.3px;">Select from list</div>
<div class="t" style="top:282.71px;font-size:11.8px;left:126.50px;width:101px;text-align:center;color:#fff;font-weight:bold;letter-spacing:-0.3px;">Location</div>
<div class="t" style="top:300.02px;font-size:12.2px;left:126.50px;width:101px;text-align:center;color:#fff;letter-spacing:-0.3px;">Select from list</div>
<div class="t" style="top:282.71px;font-size:11.8px;left:227.50px;width:101px;text-align:center;color:#fff;font-weight:bold;letter-spacing:-0.3px;">Class</div>
<div class="t" style="top:300.02px;font-size:12.2px;left:227.50px;width:101px;text-align:center;color:#fff;letter-spacing:-0.3px;">Select from list</div>
<div class="t" style="top:282.71px;font-size:11.8px;left:328.50px;width:136px;text-align:center;color:#fff;font-weight:bold;letter-spacing:-0.3px;">Tax Rate</div>
<div class="t" style="top:300.02px;font-size:12.2px;left:328.50px;width:136px;text-align:center;color:#fff;letter-spacing:-0.3px;">Select from list</div>
<div class="t" style="top:282.71px;font-size:11.8px;left:464.50px;width:101px;text-align:center;color:#fff;font-weight:bold;letter-spacing:-0.3px;">Tax Application</div>
<div class="t" style="top:300.02px;font-size:12.2px;left:464.50px;width:101px;text-align:center;color:#fff;font-weight:bold;letter-spacing:-0.3px;">ON</div>
<div class="t" style="top:282.71px;font-size:11.8px;left:565.50px;width:98px;text-align:center;color:#fff;font-weight:bold;letter-spacing:-0.3px;">Currency</div>
<div class="t" style="top:300.02px;font-size:12.2px;left:565.50px;width:98px;text-align:center;color:#fff;letter-spacing:-0.3px;">Select from list</div>
<div class="t" style="top:282.71px;font-size:11.8px;left:663.50px;width:99px;text-align:center;color:#fff;font-weight:bold;letter-spacing:-0.3px;">Debit</div>
<div class="t" style="top:300.02px;font-size:12.2px;left:663.50px;width:99px;text-align:center;color:#fff;letter-spacing:-0.3px;">(exc. Tax)</div>
<div class="t" style="top:282.71px;font-size:11.8px;left:762.50px;width:99px;text-align:center;color:#fff;font-weight:bold;letter-spacing:-0.3px;">Credit</div>
<div class="t" style="top:300.02px;font-size:12.2px;left:762.50px;width:99px;text-align:center;color:#fff;letter-spacing:-0.3px;">(exc. Tax)</div>
<div class="t" style="top:275.54px;font-size:10px;left:662.50px;width:12px;text-align:center;color:#fff;">&#9733;</div>
<div class="t" style="top:275.54px;font-size:10px;left:761.50px;width:12px;text-align:center;color:#fff;">&#9733;</div>
<div class="t" style="top:292.21px;font-size:11.8px;left:861.50px;width:99px;text-align:center;color:#fff;font-weight:bold;letter-spacing:-0.3px;">Adjustment</div>
<div class="t" style="top:290.52px;font-size:13.5px;left:960.50px;width:133px;text-align:center;color:#fff;font-weight:bold;letter-spacing:-0.3px;">Claim Type</div>
<div class="t" style="top:290.52px;font-size:13.5px;left:1093.50px;width:133px;text-align:center;color:#fff;font-weight:bold;letter-spacing:-0.3px;">Service Type</div>
<div class="a" style="left:1226px;top:273px;width:155px;height:62px;background:#d9d9d9;"></div>
<div class="t" style="top:281.84px;font-size:12px;left:1228.00px;width:150px;text-align:center;color:#222;letter-spacing:-0.3px;">QBO Edit ID</div>
<div class="t" style="top:300.08px;font-size:11.6px;left:1226.00px;width:154px;text-align:center;color:#888;">(do not modify or delete)</div>
<div class="a" style="left:1227px;top:273px;width:154px;height:1px;background-image:repeating-linear-gradient(90deg,#6a6a6a 0 3px,#fff 3px 4px);"></div>
<div class="a" style="left:26px;top:320px;width:934px;height:15px;background:#d9d9d9;"></div>
<div class="a" style="left:26px;top:320px;width:934px;height:1px;background-image:repeating-linear-gradient(90deg,#7a7a7a 0 3px,#fff 3px 4px);"></div>
<div class="a" style="left:960px;top:320px;width:266px;height:15px;background:#fff;"></div>
<div class="a" style="left:1227px;top:320px;width:154px;height:1px;background-image:repeating-linear-gradient(90deg,#6a6a6a 0 3px,#fff 3px 4px);"></div>
<div class="a" style="left:126px;top:320px;width:1px;height:15px;background-image:repeating-linear-gradient(180deg,#7a7a7a 0 3px,#fff 3px 4px);"></div>
<div class="a" style="left:227px;top:320px;width:1px;height:15px;background-image:repeating-linear-gradient(180deg,#7a7a7a 0 3px,#fff 3px 4px);"></div>
<div class="a" style="left:328px;top:320px;width:1px;height:15px;background-image:repeating-linear-gradient(180deg,#7a7a7a 0 3px,#fff 3px 4px);"></div>
<div class="a" style="left:464px;top:320px;width:1px;height:15px;background-image:repeating-linear-gradient(180deg,#7a7a7a 0 3px,#fff 3px 4px);"></div>
<div class="a" style="left:565px;top:320px;width:1px;height:15px;background-image:repeating-linear-gradient(180deg,#7a7a7a 0 3px,#fff 3px 4px);"></div>
<div class="a" style="left:663px;top:320px;width:1px;height:15px;background-image:repeating-linear-gradient(180deg,#7a7a7a 0 3px,#fff 3px 4px);"></div>
<div class="a" style="left:762px;top:320px;width:1px;height:15px;background-image:repeating-linear-gradient(180deg,#7a7a7a 0 3px,#fff 3px 4px);"></div>
<div class="a" style="left:861px;top:320px;width:1px;height:15px;background-image:repeating-linear-gradient(180deg,#7a7a7a 0 3px,#fff 3px 4px);"></div>
<div class="a" style="left:960px;top:320px;width:1px;height:15px;background-image:repeating-linear-gradient(180deg,#7a7a7a 0 3px,#fff 3px 4px);"></div>
<div class="a" style="left:960px;top:320px;width:1px;height:15px;background:#e1e1e1;"></div>
<div class="a" style="left:1093px;top:320px;width:1px;height:15px;background:#e1e1e1;"></div>
<div class="a" style="left:1380px;top:273px;width:1px;height:62px;background-image:repeating-linear-gradient(180deg,#777 0 3px,#fff 3px 4px);"></div>
<div class="a" style="left:1226px;top:320px;width:1px;height:15px;background-image:repeating-linear-gradient(180deg,#6a6a6a 0 3px,#fff 3px 4px);"></div>
<div class="a" style="left:111px;top:320px;width:15px;height:15px;border:1px solid #b9bfc9;background:linear-gradient(#fdfdfd,#eef0f3);"></div>
<svg style="left:116px;top:326px;" width="6" height="4" viewBox="0 0 6 4"><path d="M0 0h6L3 3.8z" fill="#555"/></svg>
<div class="a" style="left:212px;top:320px;width:15px;height:15px;border:1px solid #b9bfc9;background:linear-gradient(#fdfdfd,#eef0f3);"></div>
<svg style="left:217px;top:326px;" width="6" height="4" viewBox="0 0 6 4"><path d="M0 0h6L3 3.8z" fill="#555"/></svg>
<div class="a" style="left:313px;top:320px;width:15px;height:15px;border:1px solid #b9bfc9;background:linear-gradient(#fdfdfd,#eef0f3);"></div>
<svg style="left:318px;top:326px;" width="6" height="4" viewBox="0 0 6 4"><path d="M0 0h6L3 3.8z" fill="#555"/></svg>
<div class="a" style="left:449px;top:320px;width:15px;height:15px;border:1px solid #b9bfc9;background:linear-gradient(#fdfdfd,#eef0f3);"></div>
<svg style="left:454px;top:326px;" width="6" height="4" viewBox="0 0 6 4"><path d="M0 0h6L3 3.8z" fill="#555"/></svg>
<div class="a" style="left:550px;top:320px;width:15px;height:15px;border:1px solid #b9bfc9;background:linear-gradient(#fdfdfd,#eef0f3);"></div>
<svg style="left:555px;top:326px;" width="6" height="4" viewBox="0 0 6 4"><path d="M0 0h6L3 3.8z" fill="#555"/></svg>
<div class="a" style="left:648px;top:320px;width:15px;height:15px;border:1px solid #b9bfc9;background:linear-gradient(#fdfdfd,#eef0f3);"></div>
<svg style="left:653px;top:326px;" width="6" height="4" viewBox="0 0 6 4"><path d="M0 0h6L3 3.8z" fill="#555"/></svg>
<div class="a" style="left:747px;top:320px;width:15px;height:15px;border:1px solid #b9bfc9;background:linear-gradient(#fdfdfd,#eef0f3);"></div>
<svg style="left:752px;top:326px;" width="6" height="4" viewBox="0 0 6 4"><path d="M0 0h6L3 3.8z" fill="#555"/></svg>
<div class="a" style="left:846px;top:320px;width:15px;height:15px;border:1px solid #b9bfc9;background:linear-gradient(#fdfdfd,#eef0f3);"></div>
<svg style="left:851px;top:326px;" width="6" height="4" viewBox="0 0 6 4"><path d="M0 0h6L3 3.8z" fill="#555"/></svg>
<div class="a" style="left:945px;top:320px;width:15px;height:15px;border:1px solid #b9bfc9;background:linear-gradient(#fdfdfd,#eef0f3);"></div>
<svg style="left:950px;top:326px;" width="6" height="4" viewBox="0 0 6 4"><path d="M0 0h6L3 3.8z" fill="#555"/></svg>
<div class="a" style="left:1078px;top:320px;width:15px;height:15px;border:1px solid #b9bfc9;background:linear-gradient(#fdfdfd,#eef0f3);"></div>
<svg style="left:1083px;top:326px;" width="6" height="4" viewBox="0 0 6 4"><path d="M0 0h6L3 3.8z" fill="#555"/></svg>
<div class="a" style="left:1211px;top:320px;width:15px;height:15px;border:1px solid #b9bfc9;background:linear-gradient(#fdfdfd,#eef0f3);"></div>
<svg style="left:1216px;top:326px;" width="6" height="4" viewBox="0 0 6 4"><path d="M0 0h6L3 3.8z" fill="#555"/></svg>
<div class="a" style="left:1365px;top:320px;width:15px;height:15px;border:1px solid #b9bfc9;background:linear-gradient(#fdfdfd,#eef0f3);"></div>
<svg style="left:1370px;top:326px;" width="6" height="4" viewBox="0 0 6 4"><path d="M0 0h6L3 3.8z" fill="#555"/></svg>
<div class="a" style="left:0px;top:335px;width:1549px;height:1px;background:#9a9a9a;"></div>
<div class="a" style="left:26px;top:336px;width:1523px;height:1px;background:#e6e6e6;"></div>
<div class="a" style="left:1226px;top:337px;width:155px;height:641px;background:#d9d9d9;"></div>
<div class="a" style="left:26px;top:358px;width:1200px;height:1px;background:#e1e1e1;"></div>
<div class="a" style="left:1227px;top:358px;width:154px;height:1px;background-image:repeating-linear-gradient(90deg,#6a6a6a 0 3px,#fff 3px 4px);"></div>
<div class="a" style="left:26px;top:385px;width:1200px;height:1px;background:#e1e1e1;"></div>
<div class="a" style="left:1227px;top:385px;width:154px;height:1px;background-image:repeating-linear-gradient(90deg,#6a6a6a 0 3px,#fff 3px 4px);"></div>
<div class="a" style="left:26px;top:412px;width:1200px;height:1px;background:#e1e1e1;"></div>
<div class="a" style="left:1227px;top:412px;width:154px;height:1px;background-image:repeating-linear-gradient(90deg,#6a6a6a 0 3px,#fff 3px 4px);"></div>
<div class="a" style="left:26px;top:439px;width:1200px;height:1px;background:#e1e1e1;"></div>
<div class="a" style="left:1227px;top:439px;width:154px;height:1px;background-image:repeating-linear-gradient(90deg,#6a6a6a 0 3px,#fff 3px 4px);"></div>
<div class="a" style="left:26px;top:466px;width:1200px;height:1px;background:#e1e1e1;"></div>
<div class="a" style="left:1227px;top:466px;width:154px;height:1px;background-image:repeating-linear-gradient(90deg,#6a6a6a 0 3px,#fff 3px 4px);"></div>
<div class="a" style="left:26px;top:493px;width:1200px;height:1px;background:#e1e1e1;"></div>
<div class="a" style="left:1227px;top:493px;width:154px;height:1px;background-image:repeating-linear-gradient(90deg,#6a6a6a 0 3px,#fff 3px 4px);"></div>
<div class="a" style="left:26px;top:520px;width:1200px;height:1px;background:#e1e1e1;"></div>
<div class="a" style="left:1227px;top:520px;width:154px;height:1px;background-image:repeating-linear-gradient(90deg,#6a6a6a 0 3px,#fff 3px 4px);"></div>
<div class="a" style="left:26px;top:547px;width:1200px;height:1px;background:#e1e1e1;"></div>
<div class="a" style="left:1227px;top:547px;width:154px;height:1px;background-image:repeating-linear-gradient(90deg,#6a6a6a 0 3px,#fff 3px 4px);"></div>
<div class="a" style="left:26px;top:574px;width:1200px;height:1px;background:#e1e1e1;"></div>
<div class="a" style="left:1227px;top:574px;width:154px;height:1px;background-image:repeating-linear-gradient(90deg,#6a6a6a 0 3px,#fff 3px 4px);"></div>
<div class="a" style="left:26px;top:601px;width:1200px;height:1px;background:#e1e1e1;"></div>
<div class="a" style="left:1227px;top:601px;width:154px;height:1px;background-image:repeating-linear-gradient(90deg,#6a6a6a 0 3px,#fff 3px 4px);"></div>
<div class="a" style="left:26px;top:628px;width:1200px;height:1px;background:#e1e1e1;"></div>
<div class="a" style="left:1227px;top:628px;width:154px;height:1px;background-image:repeating-linear-gradient(90deg,#6a6a6a 0 3px,#fff 3px 4px);"></div>
<div class="a" style="left:26px;top:655px;width:1200px;height:1px;background:#e1e1e1;"></div>
<div class="a" style="left:1227px;top:655px;width:154px;height:1px;background-image:repeating-linear-gradient(90deg,#6a6a6a 0 3px,#fff 3px 4px);"></div>
<div class="a" style="left:26px;top:682px;width:1200px;height:1px;background:#e1e1e1;"></div>
<div class="a" style="left:1227px;top:682px;width:154px;height:1px;background-image:repeating-linear-gradient(90deg,#6a6a6a 0 3px,#fff 3px 4px);"></div>
<div class="a" style="left:26px;top:709px;width:1200px;height:1px;background:#e1e1e1;"></div>
<div class="a" style="left:1227px;top:709px;width:154px;height:1px;background-image:repeating-linear-gradient(90deg,#6a6a6a 0 3px,#fff 3px 4px);"></div>
<div class="a" style="left:26px;top:736px;width:1200px;height:1px;background:#e1e1e1;"></div>
<div class="a" style="left:1227px;top:736px;width:154px;height:1px;background-image:repeating-linear-gradient(90deg,#6a6a6a 0 3px,#fff 3px 4px);"></div>
<div class="a" style="left:26px;top:763px;width:1200px;height:1px;background:#e1e1e1;"></div>
<div class="a" style="left:1227px;top:763px;width:154px;height:1px;background-image:repeating-linear-gradient(90deg,#6a6a6a 0 3px,#fff 3px 4px);"></div>
<div class="a" style="left:26px;top:790px;width:1200px;height:1px;background:#e1e1e1;"></div>
<div class="a" style="left:1227px;top:790px;width:154px;height:1px;background-image:repeating-linear-gradient(90deg,#6a6a6a 0 3px,#fff 3px 4px);"></div>
<div class="a" style="left:26px;top:817px;width:1200px;height:1px;background:#e1e1e1;"></div>
<div class="a" style="left:1227px;top:817px;width:154px;height:1px;background-image:repeating-linear-gradient(90deg,#6a6a6a 0 3px,#fff 3px 4px);"></div>
<div class="a" style="left:26px;top:844px;width:1200px;height:1px;background:#e1e1e1;"></div>
<div class="a" style="left:1227px;top:844px;width:154px;height:1px;background-image:repeating-linear-gradient(90deg,#6a6a6a 0 3px,#fff 3px 4px);"></div>
<div class="a" style="left:26px;top:871px;width:1200px;height:1px;background:#e1e1e1;"></div>
<div class="a" style="left:1227px;top:871px;width:154px;height:1px;background-image:repeating-linear-gradient(90deg,#6a6a6a 0 3px,#fff 3px 4px);"></div>
<div class="a" style="left:26px;top:898px;width:1200px;height:1px;background:#e1e1e1;"></div>
<div class="a" style="left:1227px;top:898px;width:154px;height:1px;background-image:repeating-linear-gradient(90deg,#6a6a6a 0 3px,#fff 3px 4px);"></div>
<div class="a" style="left:26px;top:925px;width:1200px;height:1px;background:#e1e1e1;"></div>
<div class="a" style="left:1227px;top:925px;width:154px;height:1px;background-image:repeating-linear-gradient(90deg,#6a6a6a 0 3px,#fff 3px 4px);"></div>
<div class="a" style="left:26px;top:952px;width:1200px;height:1px;background:#e1e1e1;"></div>
<div class="a" style="left:1227px;top:952px;width:154px;height:1px;background-image:repeating-linear-gradient(90deg,#6a6a6a 0 3px,#fff 3px 4px);"></div>
<div class="a" style="left:26px;top:979px;width:1200px;height:1px;background:#e1e1e1;"></div>
<div class="a" style="left:1227px;top:979px;width:154px;height:1px;background-image:repeating-linear-gradient(90deg,#6a6a6a 0 3px,#fff 3px 4px);"></div>
<div class="a" style="left:126px;top:337px;width:1px;height:641px;background:#e1e1e1;"></div>
<div class="a" style="left:227px;top:337px;width:1px;height:641px;background:#e1e1e1;"></div>
<div class="a" style="left:328px;top:337px;width:1px;height:641px;background:#e1e1e1;"></div>
<div class="a" style="left:464px;top:337px;width:1px;height:641px;background:#e1e1e1;"></div>
<div class="a" style="left:565px;top:337px;width:1px;height:641px;background:#e1e1e1;"></div>
<div class="a" style="left:663px;top:337px;width:1px;height:641px;background:#e1e1e1;"></div>
<div class="a" style="left:762px;top:337px;width:1px;height:641px;background:#e1e1e1;"></div>
<div class="a" style="left:861px;top:337px;width:1px;height:641px;background:#e1e1e1;"></div>
<div class="a" style="left:960px;top:337px;width:1px;height:641px;background:#e1e1e1;"></div>
<div class="a" style="left:1093px;top:337px;width:1px;height:641px;background:#e1e1e1;"></div>
<div class="a" style="left:1226px;top:336px;width:1px;height:642px;background-image:repeating-linear-gradient(180deg,#6a6a6a 0 3px,#fff 3px 4px);"></div>
<div class="t" style="top:338.84px;font-size:12px;left:568px;color:#111;letter-spacing:-0.6px;">USD</div>
<div class="t" style="top:338.84px;font-size:12px;left:670.00px;width:90px;text-align:right;color:#111;letter-spacing:-0.3px;">819.48</div>
<div class="t" style="top:342.79px;font-size:13.3px;left:963px;color:#111;">CM</div>
<div class="t" style="top:342.79px;font-size:13.3px;left:1096px;color:#111;">Case Management</div>
<div class="t" style="top:365.84px;font-size:12px;left:568px;color:#111;letter-spacing:-0.6px;">USD</div>
<div class="t" style="top:365.84px;font-size:12px;left:670.00px;width:90px;text-align:right;color:#111;letter-spacing:-0.3px;">129.39</div>
<div class="t" style="top:369.79px;font-size:13.3px;left:963px;color:#111;">WC</div>
<div class="t" style="top:369.79px;font-size:13.3px;left:1096px;color:#111;">Bill Review</div>
<div class="t" style="top:392.84px;font-size:12px;left:568px;color:#111;letter-spacing:-0.6px;">USD</div>
<div class="t" style="top:392.84px;font-size:12px;left:670.00px;width:90px;text-align:right;color:#111;letter-spacing:-0.3px;">129.39</div>
<div class="t" style="top:396.79px;font-size:13.3px;left:963px;color:#111;">PIP</div>
<div class="t" style="top:396.79px;font-size:13.3px;left:1096px;color:#111;">Bill Review</div>
<div class="t" style="top:419.84px;font-size:12px;left:568px;color:#111;letter-spacing:-0.6px;">USD</div>
<div class="t" style="top:419.84px;font-size:12px;left:670.00px;width:90px;text-align:right;color:#111;letter-spacing:-0.3px;">3.80</div>
<div class="t" style="top:423.79px;font-size:13.3px;left:963px;color:#111;">CM</div>
<div class="t" style="top:423.79px;font-size:13.3px;left:1096px;color:#111;">Case Management</div>
<div class="t" style="top:446.84px;font-size:12px;left:568px;color:#111;letter-spacing:-0.6px;">USD</div>
<div class="t" style="top:446.84px;font-size:12px;left:670.00px;width:90px;text-align:right;color:#111;letter-spacing:-0.3px;">0.60</div>
<div class="t" style="top:450.79px;font-size:13.3px;left:963px;color:#111;">WC</div>
<div class="t" style="top:450.79px;font-size:13.3px;left:1096px;color:#111;">Bill Review</div>
<div class="t" style="top:473.84px;font-size:12px;left:568px;color:#111;letter-spacing:-0.6px;">USD</div>
<div class="t" style="top:473.84px;font-size:12px;left:670.00px;width:90px;text-align:right;color:#111;letter-spacing:-0.3px;">0.60</div>
<div class="t" style="top:477.79px;font-size:13.3px;left:963px;color:#111;">PIP</div>
<div class="t" style="top:477.79px;font-size:13.3px;left:1096px;color:#111;">Bill Review</div>
<div class="t" style="top:500.84px;font-size:12px;left:568px;color:#111;letter-spacing:-0.6px;">USD</div>
<div class="t" style="top:500.84px;font-size:12px;left:670.00px;width:90px;text-align:right;color:#111;letter-spacing:-0.3px;">333.55</div>
<div class="t" style="top:504.79px;font-size:13.3px;left:963px;color:#111;">CM</div>
<div class="t" style="top:504.79px;font-size:13.3px;left:1096px;color:#111;">Case Management</div>
<div class="t" style="top:527.84px;font-size:12px;left:568px;color:#111;letter-spacing:-0.6px;">USD</div>
<div class="t" style="top:527.84px;font-size:12px;left:670.00px;width:90px;text-align:right;color:#111;letter-spacing:-0.3px;">52.67</div>
<div class="t" style="top:531.79px;font-size:13.3px;left:963px;color:#111;">WC</div>
<div class="t" style="top:531.79px;font-size:13.3px;left:1096px;color:#111;">Bill Review</div>
<div class="t" style="top:554.84px;font-size:12px;left:568px;color:#111;letter-spacing:-0.6px;">USD</div>
<div class="t" style="top:554.84px;font-size:12px;left:670.00px;width:90px;text-align:right;color:#111;letter-spacing:-0.3px;">52.66</div>
<div class="t" style="top:558.79px;font-size:13.3px;left:963px;color:#111;">PIP</div>
<div class="t" style="top:558.79px;font-size:13.3px;left:1096px;color:#111;">Bill Review</div>
<div class="t" style="top:581.84px;font-size:12px;left:568px;color:#111;letter-spacing:-0.6px;">USD</div>
<div class="t" style="top:581.84px;font-size:12px;left:670.00px;width:90px;text-align:right;color:#111;letter-spacing:-0.3px;">213.56</div>
<div class="t" style="top:585.79px;font-size:13.3px;left:963px;color:#111;">CM</div>
<div class="t" style="top:585.79px;font-size:13.3px;left:1096px;color:#111;">Case Management</div>
<div class="t" style="top:608.84px;font-size:12px;left:568px;color:#111;letter-spacing:-0.6px;">USD</div>
<div class="t" style="top:608.84px;font-size:12px;left:670.00px;width:90px;text-align:right;color:#111;letter-spacing:-0.3px;">33.72</div>
<div class="t" style="top:612.79px;font-size:13.3px;left:963px;color:#111;">WC</div>
<div class="t" style="top:612.79px;font-size:13.3px;left:1096px;color:#111;">Bill Review</div>
<div class="t" style="top:635.84px;font-size:12px;left:568px;color:#111;letter-spacing:-0.6px;">USD</div>
<div class="t" style="top:635.84px;font-size:12px;left:670.00px;width:90px;text-align:right;color:#111;letter-spacing:-0.3px;">33.72</div>
<div class="t" style="top:639.79px;font-size:13.3px;left:963px;color:#111;">PIP</div>
<div class="t" style="top:639.79px;font-size:13.3px;left:1096px;color:#111;">Bill Review</div>
<div class="t" style="top:662.84px;font-size:12px;left:568px;color:#111;letter-spacing:-0.6px;">USD</div>
<div class="t" style="top:662.84px;font-size:12px;left:670.00px;width:90px;text-align:right;color:#111;letter-spacing:-0.3px;">223.44</div>
<div class="t" style="top:666.79px;font-size:13.3px;left:963px;color:#111;">CM</div>
<div class="t" style="top:666.79px;font-size:13.3px;left:1096px;color:#111;">Case Management</div>
<div class="t" style="top:689.84px;font-size:12px;left:568px;color:#111;letter-spacing:-0.6px;">USD</div>
<div class="t" style="top:689.84px;font-size:12px;left:670.00px;width:90px;text-align:right;color:#111;letter-spacing:-0.3px;">35.28</div>
<div class="t" style="top:693.79px;font-size:13.3px;left:963px;color:#111;">WC</div>
<div class="t" style="top:693.79px;font-size:13.3px;left:1096px;color:#111;">Bill Review</div>
<div class="t" style="top:716.84px;font-size:12px;left:568px;color:#111;letter-spacing:-0.6px;">USD</div>
<div class="t" style="top:716.84px;font-size:12px;left:670.00px;width:90px;text-align:right;color:#111;letter-spacing:-0.3px;">35.28</div>
<div class="t" style="top:720.79px;font-size:13.3px;left:963px;color:#111;">PIP</div>
<div class="t" style="top:720.79px;font-size:13.3px;left:1096px;color:#111;">Bill Review</div>
<div class="t" style="top:743.84px;font-size:12px;left:568px;color:#111;letter-spacing:-0.6px;">USD</div>
<div class="t" style="top:743.84px;font-size:12px;left:670.00px;width:90px;text-align:right;color:#111;letter-spacing:-0.3px;">35.28</div>
<div class="t" style="top:747.79px;font-size:13.3px;left:963px;color:#111;">PIP</div>
<div class="t" style="top:747.79px;font-size:13.3px;left:1096px;color:#111;">Bill Review</div>
<div class="a" style="left:1549px;top:217px;width:21px;height:793px;background:#f5f5f5;"></div>
<div class="a" style="left:1548px;top:239px;width:1px;height:739px;background:#d0d0d0;"></div>
<div class="a" style="left:1552px;top:222px;width:14px;height:14px;background:#fafafa;border-radius:7px;"></div>
<svg style="left:1554px;top:224px;" width="10" height="7" viewBox="0 0 10 7"><path d="M0.5 6.5L5 1l4.5 5.5z" fill="#5f5f5f"/></svg>
<div class="a" style="left:1555px;top:237px;width:8px;height:18px;background:#6e6e6e;border-radius:4px;"></div>
<div class="a" style="left:1552px;top:964px;width:14px;height:14px;background:#fafafa;border-radius:7px;"></div>
<svg style="left:1554px;top:968px;" width="10" height="7" viewBox="0 0 10 7"><path d="M0.5 0.5L5 6.5 9.5 0.5z" fill="#5f5f5f"/></svg>
<div class="a" style="left:1570px;top:219px;width:350px;height:791px;background:#f9f9f9;"></div>
<div class="a" style="left:1570px;top:219px;width:1px;height:791px;background:#dadada;"></div>
<div class="t" style="top:236.19px;font-size:14.6px;left:1584px;color:#242424;">Spreadsheet Sync</div>
<svg style="left:1857px;top:238px;" width="14" height="9" viewBox="0 0 14 9"><path d="M0.6 0.6l6.4 7 6.4-7" fill="none" stroke="#333" stroke-width="1.1"/></svg>
<svg style="left:1891px;top:237px;" width="11" height="11" viewBox="0 0 11 11"><path d="M0.5 0.5l10 10M10.5 0.5l-10 10" stroke="#333" stroke-width="1.1"/></svg>
<div class="a" style="left:1584px;top:261px;width:322px;height:735px;background:#edeef1;border:1px solid #d8d8d8;"></div>
<div class="a" style="left:1585px;top:262px;width:320px;height:45px;background:#fff;"></div>
<div class="a" style="left:1585px;top:307px;width:320px;height:1px;background:#dcdcdc;"></div>
<div class="a" style="left:1585px;top:321px;width:320px;height:214px;background:#fff;"></div>
<div class="a" style="left:1585px;top:535px;width:320px;height:2px;background:#d1d4d9;"></div>
<div class="a" style="left:1599px;top:281px;width:16px;height:2px;background:#333;"></div>
<div class="a" style="left:1599px;top:285px;width:16px;height:2px;background:#333;"></div>
<div class="a" style="left:1599px;top:289px;width:16px;height:2px;background:#333;"></div>
<div class="t" style="top:276.95px;font-size:14.3px;left:1605.00px;width:300px;text-align:center;color:#2b2b2b;font-weight:bold;">ManageAbility, Inc.</div>
<div class="t" style="top:337.94px;font-size:14.9px;left:1597px;color:#222;font-weight:bold;">Journal Entries</div>
<div class="t" style="top:366.75px;font-size:14.3px;left:1597px;color:#6b6c72;">Use this template to add or edit records. Once</div>
<div class="t" style="top:386.65px;font-size:14.3px;left:1597px;color:#6b6c72;">records are ready to sync then click 'Sync to</div>
<div class="t" style="top:406.55px;font-size:14.3px;left:1597px;color:#6b6c72;">IES'</div>
<svg style="left:1602px;top:450px;" width="14" height="14" viewBox="0 0 14 14"><path d="M1.5 12.5l.8-3.5 8-8a1.4 1.4 0 0 1 2 2l-8 8z" fill="none" stroke="#108a2e" stroke-width="1.3"/><path d="M8.8 2.5l2.5 2.5" stroke="#108a2e" stroke-width="1.2"/></svg>
<div class="t" style="top:451.31px;font-size:12.1px;left:1621px;color:#108a2e;-webkit-text-stroke:0.4px #108a2e;">Edit IES records and sync back</div>
<div class="a" style="left:1597px;top:477px;width:97px;height:24px;border:2px solid #108a2e;border-radius:3px;"></div>
<svg style="left:1604px;top:482px;" width="14" height="14" viewBox="0 0 14 14"><path d="M12 5.5A5.3 5.3 0 0 0 2.6 4M2 8.5a5.3 5.3 0 0 0 9.4 1.5" fill="none" stroke="#108a2e" stroke-width="1.4"/><path d="M2 1.5v3h3M12 12.5v-3H9" fill="none" stroke="#108a2e" stroke-width="1.4"/></svg>
<div class="t" style="top:484.17px;font-size:11.5px;left:1623.3px;color:#108a2e;-webkit-text-stroke:0.4px #108a2e;">Sync to IES</div>
<div class="a" style="left:1585px;top:935px;width:320px;height:1px;background:#d8d8d8;"></div>
<div class="a" style="left:1585px;top:936px;width:320px;height:59px;background:#fff;"></div>
<div class="t" style="top:957.05px;font-size:16.3px;left:1597px;color:#8338ec;">Go Home</div>
<div class="a" style="left:0px;top:979px;width:1549px;height:31px;background:#f0f0f0;"></div>
<div class="a" style="left:26px;top:978px;width:1355px;height:1px;background:#dedede;"></div>
<svg style="left:28px;top:989px;" width="8" height="10" viewBox="0 0 8 10"><path d="M6.5 0.5L1.5 5l5 4.5" fill="none" stroke="#9a9a9a" stroke-width="1.1"/></svg>
<svg style="left:60px;top:989px;" width="8" height="10" viewBox="0 0 8 10"><path d="M1.5 0.5L6.5 5l-5 4.5" fill="none" stroke="#9a9a9a" stroke-width="1.1"/></svg>
<div class="a" style="left:116px;top:982px;width:125px;height:24px;background:#5b8c3c;border-radius:4px;"></div>
<div class="t" style="top:987.21px;font-size:14.1px;left:108.50px;width:140px;text-align:center;color:#fff;">Notes &amp; Controls</div>
<div class="a" style="left:246px;top:986px;width:1px;height:16px;background:#c8c8c8;"></div>
<div class="a" style="left:250px;top:977px;width:162px;height:30px;background:#fff;border:1px solid #e3e3e3;border-top:none;border-radius:0 0 5px 5px;"></div>
<div class="t" style="top:984.83px;font-size:14.2px;left:258px;color:#1e1e1e;-webkit-text-stroke:0.3px #1e1e1e;">Journal Entry Template</div>
<div class="a" style="left:258px;top:1000.6px;width:146px;height:2px;background:#107c41;"></div>
<div class="a" style="left:417px;top:986px;width:1px;height:16px;background:#c8c8c8;"></div>
<div class="t" style="top:988.18px;font-size:13.2px;left:428px;color:#333;">Sheet1</div>
<div class="a" style="left:482px;top:986px;width:1px;height:16px;background:#c8c8c8;"></div>
<svg style="left:524px;top:987px;" width="13" height="13" viewBox="0 0 13 13"><path d="M6.5 0v13M0 6.5h13" stroke="#444" stroke-width="1.1"/></svg>
<div class="a" style="left:944px;top:988px;width:2px;height:2px;background:#222;"></div>
<div class="a" style="left:944px;top:993px;width:2px;height:2px;background:#222;"></div>
<div class="a" style="left:944px;top:998px;width:2px;height:2px;background:#222;"></div>
<div class="a" style="left:962px;top:985px;width:587px;height:17px;background:#f7f7f7;border-radius:8px;"></div>
<svg style="left:964px;top:988px;" width="8" height="11" viewBox="0 0 8 11"><path d="M7.5 0.5v10L0.5 5.5z" fill="#5f5f5f"/></svg>
<div class="a" style="left:1205px;top:989px;width:326px;height:9px;background:#6e6e6e;border-radius:5px;"></div>
<svg style="left:1536px;top:988px;" width="8" height="11" viewBox="0 0 8 11"><path d="M0.5 0.5v10l7-5z" fill="#5f5f5f"/></svg>
<div class="a" style="left:0px;top:1010px;width:1920px;height:22px;background:#f5f5f5;"></div>
<div class="a" style="left:0px;top:1010px;width:1570px;height:1px;background:#e8e8e8;"></div>
<div class="a" style="left:0px;top:1032px;width:1920px;height:1px;background:#bdbdbd;"></div>
<div class="t" style="top:1016.09px;font-size:11px;left:12px;color:#444;">Ready</div>
<div class="t" style="top:1016.45px;font-size:11.1px;left:58px;color:#222;-webkit-text-stroke:0.15px #222;">Calculate</div>
<svg style="left:124px;top:1015px;" width="15" height="13" viewBox="0 0 15 13"><rect x="0.5" y="0.5" width="14" height="11.5" fill="none" stroke="#333"/><path d="M0.5 3h14M2.5 5.5h3M2.5 8h3M2.5 10.5h3" stroke="#333"/><circle cx="10" cy="8" r="2.5" fill="none" stroke="#333" stroke-width="1.1"/><circle cx="10" cy="8" r="1" fill="#333"/></svg>
<svg style="left:157px;top:1014px;" width="14" height="14" viewBox="0 0 14 14"><circle cx="6" cy="2" r="1.5" fill="none" stroke="#333"/><path d="M1 4.5h10M6 4.5v4l-3.5 5M6 8.5l3 5M8 9l5 5M13 9l-5 5" fill="none" stroke="#333" stroke-width="1"/></svg>
<div class="t" style="top:1015.71px;font-size:11.8px;left:175px;color:#222;-webkit-text-stroke:0.4px #222;">Accessibility: Investigate</div>
<div class="a" style="left:1620px;top:1011px;width:40px;height:21px;background:#dedede;"></div>
<svg style="left:1633px;top:1014px;" width="14" height="13" viewBox="0 0 14 13"><path d="M0.5 0.5h13v12h-13zM0.5 4.5h13M0.5 8.5h13M4.8 0.5v12M9.2 0.5v12" fill="none" stroke="#222" stroke-width="1.1"/></svg>
<svg style="left:1673px;top:1014px;" width="14" height="13" viewBox="0 0 14 13"><rect x="0.5" y="0.5" width="13" height="12" fill="none" stroke="#222" stroke-width="1.1"/><rect x="3" y="2.5" width="8" height="8" fill="none" stroke="#222" stroke-width=".9"/><path d="M4.5 4.5h5M4.5 6.5h5M4.5 8.5h5" stroke="#222" stroke-width=".8"/></svg>
<svg style="left:1713px;top:1014px;" width="14" height="13" viewBox="0 0 14 13"><rect x="0.5" y="0.5" width="13" height="12" fill="none" stroke="#222" stroke-width="1.1"/><path d="M5 0.5v5h3.5v-5" fill="none" stroke="#222" stroke-width="1.1"/></svg>
<div class="a" style="left:1746px;top:1020px;width:8px;height:1px;background:#333;"></div>
<div class="a" style="left:1759px;top:1021px;width:100px;height:1px;background:#555;"></div>
<div class="a" style="left:1807px;top:1016px;width:5px;height:10px;background:#555;"></div>
<svg style="left:1863px;top:1016px;" width="9" height="9" viewBox="0 0 9 9"><path d="M4.5 0v9M0 4.5h9" stroke="#333" stroke-width="1"/></svg>
<div class="t" style="top:1016.85px;font-size:10.4px;left:1885.3px;color:#333;">100%</div>
<div class="a" style="left:0px;top:1033px;width:1920px;height:47px;background:#eeeeee;"></div>
<svg style="left:17px;top:1046px;" width="26" height="18" viewBox="0 0 26 18"><path d="M1 7h16M1 11.5h20" stroke="#7d9ccc" stroke-width="2" stroke-linecap="round"/><circle cx="17" cy="6" r="2.6" fill="#6b8cc4"/><circle cx="21" cy="11.5" r="3" fill="#6b8cc4"/><path d="M6 15h10" stroke="#9fb6dc" stroke-width="1.6" stroke-linecap="round"/></svg>
<div class="t" style="top:1043.22px;font-size:10.9px;left:50.5px;color:#222;">39°F</div>
<div class="t" style="top:1058.62px;font-size:12.2px;left:51px;color:#555;">Windy</div>
<svg style="left:572px;top:1044px;" width="25" height="25" viewBox="0 0 25 25"><defs><linearGradient id="wg" x1="0" y1="0" x2="1" y2="1"><stop offset="0" stop-color="#4cc2ff"/><stop offset="1" stop-color="#0a74d6"/></linearGradient></defs>
<rect x="0.5" y="0.5" width="11.2" height="11.2" rx="1" fill="url(#wg)"/><rect x="13" y="0.5" width="11.2" height="11.2" rx="1" fill="url(#wg)"/><rect x="0.5" y="13" width="11.2" height="11.2" rx="1" fill="url(#wg)"/><rect x="13" y="13" width="11.2" height="11.2" rx="1" fill="url(#wg)"/></svg>
<div class="a" style="left:609px;top:1040px;width:219px;height:32px;background:#fafafa;border:1px solid #d8d8d8;border-radius:16px;"></div>
<svg style="left:620px;top:1049px;" width="16" height="16" viewBox="0 0 16 16"><circle cx="6.5" cy="6.5" r="5.3" fill="none" stroke="#222" stroke-width="1.5"/><path d="M10.5 10.5l4.5 4.5" stroke="#222" stroke-width="1.7" stroke-linecap="round"/></svg>
<div class="t" style="top:1050.88px;font-size:12.6px;left:646px;color:#555;">Search</div>
<svg style="left:840px;top:1045px;" width="25" height="23" viewBox="0 0 25 23"><rect x="9" y="1" width="14" height="14" rx="1.5" fill="#e3e3e3" stroke="#c8c8c8"/><rect x="1" y="8" width="14" height="14" rx="1.5" fill="#222"/><rect x="5" y="8" width="10" height="9" fill="#b5b5b5"/></svg>
<svg style="left:884px;top:1045px;" width="25" height="22" viewBox="0 0 25 22"><path d="M1 3a2 2 0 0 1 2-2h6l2 2.5h11a2 2 0 0 1 2 2V19a2 2 0 0 1-2 2H3a2 2 0 0 1-2-2z" fill="#f7c843"/><path d="M1 7h23v12a2 2 0 0 1-2 2H3a2 2 0 0 1-2-2z" fill="#ffd75e"/><rect x="6" y="15" width="13" height="5" rx="1" fill="#1f7fd6"/></svg>
<svg style="left:928px;top:1044px;" width="25" height="25" viewBox="0 0 25 25"><defs><linearGradient id="eg" x1="0" y1="0" x2="1" y2="1"><stop offset="0" stop-color="#36c6a0"/><stop offset=".5" stop-color="#1b9de2"/><stop offset="1" stop-color="#0c59a4"/></linearGradient></defs>
<circle cx="12.5" cy="12.5" r="11.5" fill="url(#eg)"/><circle cx="14" cy="13" r="5" fill="#ebebeb"/><path d="M8 13a6 6 0 0 0 12 0" fill="#42d37f"/>
<rect x="1" y="15" width="10" height="9" rx="1.2" fill="#b0692b"/><rect x="4" y="13" width="4" height="3" fill="none" stroke="#b0692b" stroke-width="1.2"/><rect x="1" y="18" width="10" height="1.3" fill="#e0a050"/></svg>
<svg style="left:972px;top:1040px;" width="32" height="30" viewBox="0 0 32 30"><circle cx="12" cy="7" r="3.5" fill="#7b83eb"/><rect x="10" y="12" width="15" height="15" rx="3" fill="#7b83eb"/><rect x="3" y="13" width="12" height="12" rx="1.5" fill="#4b53bc"/><path d="M6 16h6M9 16v7" stroke="#fff" stroke-width="1.6"/><circle cx="25" cy="7" r="6" fill="#c50f1f"/></svg>
<div class="a" style="left:981px;top:1072px;width:8px;height:3px;background:#777;border-radius:2px;"></div>
<svg style="left:1017px;top:1044px;" width="25" height="25" viewBox="0 0 25 25"><rect x="1" y="2" width="19" height="14" rx="1" fill="#d0d8e8" stroke="#6c7a92"/><rect x="3" y="4" width="15" height="10" fill="#1565c0"/><path d="M4 20h12" stroke="#6c7a92" stroke-width="2"/><circle cx="19" cy="19" r="5" fill="#e0e0e0" stroke="#8a8a8a"/><path d="M17 19l2-2M17 19l2 2M21 19h-3" stroke="#2e7d32" stroke-width="1.2"/></svg>
<svg style="left:1060px;top:1043px;" width="26" height="26" viewBox="0 0 26 26"><circle cx="13" cy="13" r="11.5" fill="none" stroke="#1a6fd6" stroke-width="2.4"/><path d="M18.5 8.5A7 7 0 1 0 18.5 17.5" fill="none" stroke="#1a6fd6" stroke-width="2.6"/><path d="M15.5 11A3 3 0 1 0 15.5 15" fill="none" stroke="#1a6fd6" stroke-width="2"/></svg>
<svg style="left:1103px;top:1038px;" width="31" height="31" viewBox="0 0 31 31"><rect x="9" y="9" width="19" height="18" rx="2" fill="#1f8ce6"/><rect x="14" y="12" width="13" height="10" fill="#50b8f5"/><rect x="2" y="14" width="13" height="13" rx="2" fill="#0b5cad"/><circle cx="8.5" cy="20.5" r="3.2" fill="none" stroke="#fff" stroke-width="1.6"/><circle cx="23" cy="7" r="6.5" fill="#2aa0ea"/><rect x="19.5" y="4.5" width="7" height="5" fill="none" stroke="#111" stroke-width="1"/><path d="M19.5 4.5l3.5 3 3.5-3" fill="none" stroke="#111" stroke-width="1"/></svg>
<svg style="left:1148px;top:1044px;" width="25" height="25" viewBox="0 0 25 25"><circle cx="12.5" cy="12.5" r="12" fill="#db4437"/><path d="M12.5 12.5L23.9 8.5A12 12 0 0 0 12.5 .5 12 12 0 0 0 2 6.5z" fill="#db4437"/><path d="M12.5 12.5L2 6.5A12 12 0 0 0 8 23.6z" fill="#0f9d58"/><path d="M12.5 12.5L8 23.6A12 12 0 0 0 24.5 12.5 12 12 0 0 0 23.9 8.5z" fill="#f4b400"/><circle cx="12.5" cy="12.5" r="5.5" fill="#fff"/><circle cx="12.5" cy="12.5" r="4.3" fill="#1a73e8"/></svg>
<svg style="left:1192px;top:1044px;" width="24" height="25" viewBox="0 0 24 25"><rect x="6" y="2" width="17" height="21" rx="2" fill="#ca64ea"/><rect x="12" y="2" width="11" height="11" rx="1" fill="#e8a6f5"/><rect x="1" y="8" width="12" height="12" rx="1.5" fill="#7719aa"/><path d="M4 17v-6l5 6v-6" fill="none" stroke="#fff" stroke-width="1.4"/></svg>
<div class="a" style="left:1229px;top:1036px;width:39px;height:39px;background:#eab8b8;border-radius:4px;"></div>
<svg style="left:1236px;top:1044px;" width="25" height="23" viewBox="0 0 25 23"><path d="M1 2a1 1 0 0 1 1-1h5l2 2h8a1 1 0 0 1 1 1v17H1z" fill="#f2c94c"/><rect x="4" y="4" width="9" height="15" fill="#fff3c4"/><path d="M9 22a4 4 0 0 1 1-8 5.5 5.5 0 0 1 10 0 4 4 0 0 1 1 8z" fill="#2b8ae6"/></svg>
<div class="a" style="left:1231px;top:1071px;width:35px;height:3px;background:#d32f2f;border-radius:2px;"></div>
<svg style="left:1281px;top:1044px;" width="25" height="25" viewBox="0 0 25 25"><rect x="0.5" y="0.5" width="24" height="24" rx="5" fill="#3b1a8c"/><path d="M17.5 9.5A6 6 0 1 0 17.5 15.5v-3h-4" fill="none" stroke="#fff" stroke-width="2.2"/><circle cx="6" cy="5" r="1" fill="#fff"/><circle cx="19" cy="19" r="1" fill="#cfc"/></svg>
<div class="a" style="left:1316px;top:1037px;width:36px;height:38px;background:#fafafa;border-radius:4px;border:1px solid #e4e4e4;"></div>
<svg style="left:1322px;top:1042px;" width="25" height="26" viewBox="0 0 25 26"><rect x="4" y="1" width="20" height="24" rx="2" fill="#21a366"/><path d="M14 1h8a2 2 0 0 1 2 2v10H14z" fill="#9ed65a"/><path d="M4 3a2 2 0 0 1 2-2h8v12H4z" fill="#33c481"/><path d="M14 13h10v10a2 2 0 0 1-2 2h-8z" fill="#107c41"/><rect x="0" y="7" width="13" height="13" rx="1.5" fill="#185c37"/><path d="M3.5 10l6 7M9.5 10l-6 7" stroke="#fff" stroke-width="1.6"/></svg>
<div class="a" style="left:1328px;top:1072px;width:16px;height:3px;background:#0f6cbd;border-radius:2px;"></div>
<div class="a" style="left:893px;top:1072px;width:8px;height:3px;background:#777;border-radius:2px;"></div>
<div class="a" style="left:1112px;top:1072px;width:8px;height:3px;background:#777;border-radius:2px;"></div>
<div class="a" style="left:1156px;top:1072px;width:8px;height:3px;background:#777;border-radius:2px;"></div>
<div class="a" style="left:1201px;top:1072px;width:8px;height:3px;background:#777;border-radius:2px;"></div>
<div class="a" style="left:1289px;top:1072px;width:8px;height:3px;background:#777;border-radius:2px;"></div>
<div class="t" style="top:1043.41px;font-size:11.8px;left:1800.00px;width:100px;text-align:right;color:#222;">11:53 AM</div>
<div class="t" style="top:1058.01px;font-size:12.1px;left:1800.50px;width:100px;text-align:right;color:#222;">3/16/2026</div>
</body></html>
